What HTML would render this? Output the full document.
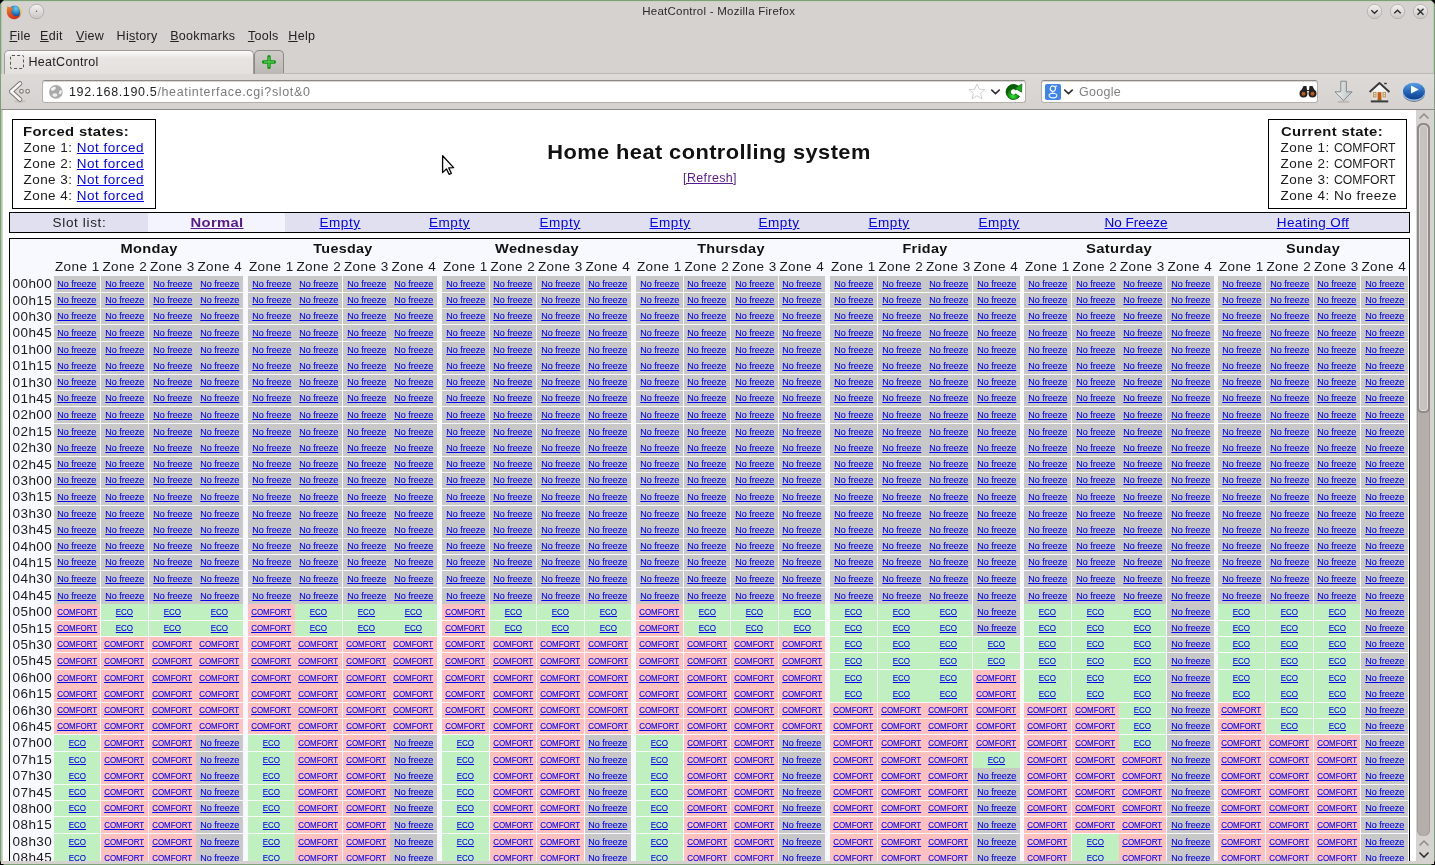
<!DOCTYPE html>
<html><head><meta charset="utf-8"><title>HeatControl</title><style>
html,body{margin:0;padding:0}
body{width:1435px;height:865px;overflow:hidden;background:#d6d2d0;font-family:"Liberation Sans",sans-serif;position:relative}
#w{position:absolute;left:0;top:0;width:1435px;height:865px;will-change:transform;overflow:hidden}
.a{position:absolute;white-space:nowrap}
#ct{position:absolute;left:0;top:0;width:1435px;height:865px;clip-path:inset(110px 19px 4px 3px)}
.c{position:absolute;height:15px;font-size:9.6px;line-height:15px;display:flex;justify-content:center;color:#0000ee;white-space:nowrap}
.c a{display:inline-block;text-decoration:underline;transform:scaleX(.9375);-webkit-text-stroke:0.12px #0000ee}
.n{background:#c8c8c8}
.p{background:#ffc0c0}
.p a{transform:scaleX(.828)}
.e{background:#c0f0c0}
.e a{transform:scaleX(.833)}
.tl{position:absolute;font-size:13.5px;line-height:16px;color:#1a1a1a;letter-spacing:0.45px}
</style></head>
<body><div id="w">
<div class="a" style="left:0px;top:0px;width:1435px;height:1px;background:#7e9f79;"></div>
<div class="a" style="left:0px;top:0px;width:1px;height:865px;background:#7e9f79;"></div>
<div class="a" style="left:1434px;top:0px;width:1px;height:865px;background:#7e9f79;"></div>
<div class="a" style="left:0px;top:864px;width:1435px;height:1px;background:#7e9f79;"></div>
<div class="a" style="left:1px;top:1px;width:1433px;height:1px;background:#c3d5bd;"></div>
<div class="a" style="left:1px;top:1px;width:1px;height:863px;background:#b5c9ae;"></div>
<div class="a" style="left:1433px;top:1px;width:1px;height:863px;background:#b5c9ae;"></div>
<svg class="a" style="left:0;top:0" width="4" height="4"><path d="M0 0 H4 L0 4 Z" fill="#000"/></svg>
<svg class="a" style="left:1431px;top:0" width="4" height="4"><path d="M0 0 H4 V4 Z" fill="#000"/></svg>
<svg class="a" style="left:0;top:861px" width="4" height="4"><path d="M0 0 V4 H4 Z" fill="#000"/></svg>
<svg class="a" style="left:1431px;top:861px" width="4" height="4"><path d="M4 0 V4 H0 Z" fill="#000"/></svg>
<div class="a" style="left:518.70px;top:6.27px;font-size:11.5px;line-height:11.5px;color:#2a2a2a;letter-spacing:0.25px;width:400px;text-align:center;">HeatControl - Mozilla Firefox</div>
<svg class="a" style="left:6px;top:4px" width="16" height="16" viewBox="0 0 16 16">
<defs><radialGradient id="fb" cx="0.6" cy="0.25" r="0.7"><stop offset="0" stop-color="#62d0f5"/><stop offset="0.6" stop-color="#1f78c8"/><stop offset="1" stop-color="#142f7a"/></radialGradient>
<linearGradient id="fo" x1="0" y1="0" x2="0.3" y2="1"><stop offset="0" stop-color="#f08a22"/><stop offset="1" stop-color="#d2331a"/></linearGradient>
<linearGradient id="fy" x1="0" y1="0" x2="0" y2="1"><stop offset="0" stop-color="#ffe15a"/><stop offset="1" stop-color="#f39a1c"/></linearGradient></defs>
<circle cx="8.7" cy="7.8" r="6.4" fill="url(#fb)"/>
<path d="M1.6 2.0 L3.6 3.4 L5.4 2.6 L6.0 4.4 L7.4 5.0 L5.6 6.4 C5.0 9.6 7.6 12.4 11 12.2 C12.9 12.1 14.4 11.0 15.2 9.2 C14.6 12.8 11.6 15.2 8.0 15.2 C3.8 15.2 0.8 11.8 0.8 7.6 C0.8 5.6 1.1 3.6 1.6 2.0 Z" fill="url(#fo)"/>
<path d="M11.8 1.6 C14.4 2.6 15.8 5.0 15.5 8.4 C15.2 10.4 14.4 11.6 13.2 12.4 C14.2 10.4 14.4 8.0 13.7 5.8 C13.3 4.3 12.6 2.8 11.8 1.6 Z" fill="url(#fy)"/>
</svg>
<svg class="a" style="left:28px;top:3px" width="17" height="17" viewBox="0 0 17 17">
<defs><linearGradient id="gb" x1="0" y1="0" x2="0" y2="1"><stop offset="0" stop-color="#f4f2f1"/><stop offset="1" stop-color="#c9c5c3"/></linearGradient></defs>
<circle cx="8.5" cy="8.5" r="7.3" fill="url(#gb)" stroke="#aaa5a2" stroke-width="0.8"/>
<circle cx="8.5" cy="8.3" r="0.7" fill="#555"/></svg>
<svg class="a" style="left:1365.8px;top:3px" width="17" height="17" viewBox="0 0 17 17">
<circle cx="8.5" cy="8.5" r="7.2" fill="url(#gb)" stroke="#b0aba8" stroke-width="0.8"/><path d="M5.3 7.2 L8.5 10.2 L11.7 7.2" fill="none" stroke="#2a2a2a" stroke-width="1.35"/></svg>
<svg class="a" style="left:1388.9px;top:3px" width="17" height="17" viewBox="0 0 17 17">
<circle cx="8.5" cy="8.5" r="7.2" fill="url(#gb)" stroke="#b0aba8" stroke-width="0.8"/><path d="M5.3 10.2 L8.5 7.2 L11.7 10.2" fill="none" stroke="#2a2a2a" stroke-width="1.35"/></svg>
<svg class="a" style="left:1412.0px;top:3px" width="17" height="17" viewBox="0 0 17 17">
<circle cx="8.5" cy="8.5" r="7.2" fill="url(#gb)" stroke="#b0aba8" stroke-width="0.8"/><path d="M5.5 5.8 L11.5 11.8 M11.5 5.8 L5.5 11.8" fill="none" stroke="#2a2a2a" stroke-width="1.35"/></svg>
<div class="a" style="left:9.40px;top:30.22px;font-size:12.5px;line-height:12.5px;color:#222;letter-spacing:0.3px;"><u>F</u>ile</div>
<div class="a" style="left:40.10px;top:30.22px;font-size:12.5px;line-height:12.5px;color:#222;letter-spacing:0.3px;"><u>E</u>dit</div>
<div class="a" style="left:76.10px;top:30.22px;font-size:12.5px;line-height:12.5px;color:#222;letter-spacing:0.3px;"><u>V</u>iew</div>
<div class="a" style="left:116.60px;top:30.22px;font-size:12.5px;line-height:12.5px;color:#222;letter-spacing:0.3px;">Hi<u>s</u>tory</div>
<div class="a" style="left:170.20px;top:30.22px;font-size:12.5px;line-height:12.5px;color:#222;letter-spacing:0.3px;"><u>B</u>ookmarks</div>
<div class="a" style="left:247.90px;top:30.22px;font-size:12.5px;line-height:12.5px;color:#222;letter-spacing:0.3px;"><u>T</u>ools</div>
<div class="a" style="left:288.30px;top:30.22px;font-size:12.5px;line-height:12.5px;color:#222;letter-spacing:0.3px;"><u>H</u>elp</div>
<div class="a" style="left:4px;top:50px;width:248px;height:24px;border:1px solid #9f9b98;border-bottom:none;border-radius:5px 5px 0 0;background:linear-gradient(#fbfbfa,#e8e5e3 30%,#e3e0de)"></div>
<div class="a" style="left:254px;top:50px;width:28px;height:24px;border:1px solid #8d8986;border-bottom:none;border-radius:5px 5px 0 0;background:linear-gradient(#cfcbc9,#bab6b4)"></div>
<div class="a" style="left:283px;top:73px;width:1151px;height:1px;background:#bdb9b6;"></div>
<div class="a" style="left:10px;top:55px;width:12px;height:12px;border:1px dashed #555;border-radius:2px"></div>
<div class="a" style="left:28.50px;top:56.22px;font-size:12.5px;line-height:12.5px;color:#222;letter-spacing:0.3px;">HeatControl</div>
<svg class="a" style="left:261px;top:54px" width="16" height="16" viewBox="0 0 16 16">
<path d="M8 2.6 V13.4 M2.6 8 H13.4" stroke="#0b960b" stroke-width="3.4" stroke-linecap="round"/>
<path d="M8 3.4 V12.6 M3.4 8 H12.6" stroke="#52c852" stroke-width="1.3" stroke-linecap="round"/></svg>
<div class="a" style="left:1px;top:74px;width:1433px;height:35px;background:linear-gradient(#dedad8,#d6d2d0);"></div>
<div class="a" style="left:1px;top:109px;width:1433px;height:1px;background:#8f8b88;"></div>
<svg class="a" style="left:6px;top:80px" width="26" height="24" viewBox="0 0 26 24">
<ellipse cx="14" cy="21.3" rx="6" ry="1.4" fill="#b8b4b1" opacity="0.6"/>
<path d="M14 3.5 L5.2 11.5 L14 19.5" fill="none" stroke="#777370" stroke-width="4.6" stroke-linecap="round" stroke-linejoin="round"/>
<path d="M14 3.5 L5.2 11.5 L14 19.5" fill="none" stroke="#f7f6f5" stroke-width="2.8" stroke-linecap="round" stroke-linejoin="round"/>
<circle cx="15.5" cy="11.3" r="1.8" fill="#f7f6f5" stroke="#777370" stroke-width="1.1"/>
<circle cx="21.6" cy="11.3" r="1.8" fill="#f7f6f5" stroke="#777370" stroke-width="1.1"/></svg>
<div class="a" style="left:42px;top:80px;width:982px;height:21px;border:1px solid #b3afac;border-top-color:#8d8986;border-radius:3px;background:#fff;box-shadow:inset 0 1px 0 #d8d6d4"></div>
<svg class="a" style="left:49px;top:85px" width="14" height="14" viewBox="0 0 14 14">
<circle cx="6.9" cy="6.9" r="6.8" fill="#a9a9a9"/>
<ellipse cx="4.4" cy="3.7" rx="2.7" ry="1.6" fill="#f2f2f2" transform="rotate(-25 4.4 3.7)"/>
<ellipse cx="5.9" cy="10.1" rx="2.6" ry="1.8" fill="#eeeeee"/>
<ellipse cx="11.4" cy="7.2" rx="1.3" ry="2.2" fill="#f0f0f0" transform="rotate(25 11.4 7.2)"/></svg>
<div class="a" style="left:69.00px;top:86.22px;font-size:12.5px;line-height:12.5px;color:#7a7a7a;letter-spacing:0.65px;"><span style="color:#1e1e1e">192.168.190.5</span>/heatinterface.cgi?slot&amp;0</div>
<svg class="a" style="left:968px;top:83px" width="18" height="17" viewBox="0 0 18 17">
<path d="M9 1 L11.3 6.2 L17 6.6 L12.6 10.3 L14 15.8 L9 12.8 L4 15.8 L5.4 10.3 L1 6.6 L6.7 6.2 Z" fill="#fff" stroke="#c8c8c8" stroke-width="0.9"/></svg>
<svg class="a" style="left:990px;top:87px" width="11" height="9" viewBox="0 0 11 9">
<path d="M1.3 2.6 L5.5 6.6 L9.7 2.6" fill="none" stroke="#2a2a2a" stroke-width="1.5"/></svg>
<svg class="a" style="left:1004px;top:83px" width="19" height="18" viewBox="0 0 19 18">
<defs><radialGradient id="rg" cx="0.5" cy="0.85" r="0.7"><stop offset="0" stop-color="#3df03d"/><stop offset="0.6" stop-color="#14a014"/><stop offset="1" stop-color="#066006"/></radialGradient></defs>
<path d="M13.56 5.59 A5.3 5.3 0 1 0 13.84 12.04" fill="none" stroke="#0a5a0a" stroke-width="5.2"/>
<path d="M13.56 5.59 A5.3 5.3 0 1 0 13.84 12.04" fill="none" stroke="url(#rg)" stroke-width="4.0"/>
<path d="M10.8 5.2 L17.9 1.0 L17.6 9.2 Z" fill="#18a818" stroke="#0a5a0a" stroke-width="0.7" stroke-linejoin="round"/></svg>
<div class="a" style="left:1041px;top:80px;width:275px;height:21px;border:1px solid #b3afac;border-top-color:#8d8986;border-radius:3px;background:#fff;box-shadow:inset 0 1px 0 #d8d6d4"></div>
<div class="a" style="left:1045px;top:84px;width:16px;height:16px;background:#3f83ef;border-radius:2px"></div>
<svg class="a" style="left:1045px;top:84px" width="16" height="16" viewBox="0 0 16 16">
<ellipse cx="7.9" cy="4.6" rx="2.6" ry="2.6" fill="none" stroke="#fff" stroke-width="1.1" transform="rotate(25 7.9 4.6)"/>
<ellipse cx="8" cy="11.6" rx="3.9" ry="2.3" fill="none" stroke="#fff" stroke-width="1.1"/>
<path d="M7.2 7.1 C6.5 8 6.8 8.8 8.6 9.2" fill="none" stroke="#fff" stroke-width="1"/>
<path d="M9.8 2.3 L12.2 2.1" stroke="#fff" stroke-width="1"/></svg>
<svg class="a" style="left:1063px;top:87px" width="11" height="9" viewBox="0 0 11 9">
<path d="M1.3 2.6 L5.5 6.6 L9.7 2.6" fill="none" stroke="#2a2a2a" stroke-width="1.5"/></svg>
<div class="a" style="left:1079.00px;top:86.12px;font-size:12.5px;line-height:12.5px;color:#808080;letter-spacing:0.3px;">Google</div>
<svg class="a" style="left:1299px;top:85px" width="18" height="13" viewBox="0 0 18 13">
<path d="M2 6 L4.5 1 L7.5 1 L8 5 L10 5 L10.5 1 L13.5 1 L16 6 Z" fill="#222"/>
<circle cx="4.5" cy="8.5" r="4" fill="#222"/><circle cx="13.5" cy="8.5" r="4" fill="#222"/>
<circle cx="4.5" cy="8.7" r="2" fill="#b85a1a"/><circle cx="13.5" cy="8.7" r="2" fill="#b85a1a"/></svg>
<svg class="a" style="left:1334px;top:80px" width="20" height="24" viewBox="0 0 20 24">
<defs><linearGradient id="dg" x1="0" y1="0" x2="1" y2="0"><stop offset="0" stop-color="#f3f5f6"/><stop offset="1" stop-color="#b4bcc0"/></linearGradient></defs>
<ellipse cx="9.5" cy="21.8" rx="6.5" ry="1.2" fill="#b3afac" opacity="0.7"/>
<path d="M6.8 1.2 H12.4 V11.8 H18.2 L9.6 20.6 L1 11.8 H6.8 Z" fill="url(#dg)" stroke="#858b8e" stroke-width="1" stroke-linejoin="round"/></svg>
<svg class="a" style="left:1368px;top:81px" width="23" height="22" viewBox="0 0 23 22">
<defs><linearGradient id="hw" x1="0" y1="0" x2="0" y2="1"><stop offset="0" stop-color="#ffffff"/><stop offset="1" stop-color="#dcdcdc"/></linearGradient></defs>
<path d="M4.2 9.5 L11.5 3 L18.8 9.5 V19.8 H4.2 Z" fill="url(#hw)"/>
<path d="M1.6 11 L11.5 2 L21.4 11" fill="none" stroke="#3a3a3a" stroke-width="1.9" stroke-linejoin="round"/>
<rect x="16.2" y="1.8" width="2.6" height="1.4" fill="#333"/>
<rect x="9.6" y="11.2" width="3.8" height="8.2" fill="#c85a10"/>
<rect x="9.6" y="18.6" width="3.8" height="0.9" fill="#4a8a2a"/>
<rect x="5.4" y="11.4" width="2.6" height="4.6" fill="none" stroke="#b88a4a" stroke-width="0.9"/>
<rect x="15" y="11.4" width="2.6" height="4.6" fill="none" stroke="#b88a4a" stroke-width="0.9"/>
<path d="M5.4 13.7 H8 M15 13.7 H17.6" stroke="#b88a4a" stroke-width="0.8"/>
<rect x="2.8" y="19.4" width="17.4" height="2" fill="#3c3c3c"/></svg>
<svg class="a" style="left:1402px;top:81px" width="24" height="22" viewBox="0 0 24 22">
<defs><linearGradient id="bp" x1="0" y1="0" x2="0" y2="1"><stop offset="0" stop-color="#5a9ee6"/><stop offset="0.6" stop-color="#1f5fb5"/><stop offset="1" stop-color="#103f8a"/></linearGradient></defs>
<ellipse cx="12" cy="12.6" rx="11" ry="8.4" fill="#2b2b2b" opacity="0.55"/>
<ellipse cx="12" cy="11.4" rx="11" ry="8.6" fill="#8fc0f0"/>
<ellipse cx="12" cy="10.2" rx="11" ry="8.4" fill="url(#bp)"/>
<path d="M9 4.4 L16.8 8.6 L9 12.4 Z" fill="#fff"/></svg>
<div id="ct">
<div class="a" style="left:0px;top:109px;width:1435px;height:756px;background:#fff;"></div>
<div class="a" style="left:12px;top:119px;width:142px;height:88px;border:1px solid #000"></div>
<div class="a" style="left:23.40px;top:125.37px;font-size:13.5px;line-height:13.5px;color:#111;font-weight:bold;letter-spacing:0.3px;transform:scaleX(1.10);transform-origin:0 0;">Forced states:</div>
<div class="a" style="left:23.40px;top:141.47px;font-size:13.5px;line-height:13.5px;color:#1a1a1a;letter-spacing:0.49px;">Zone 1: <span style="color:#0000ee;text-decoration:underline">Not forced</span></div>
<div class="a" style="left:23.40px;top:157.47px;font-size:13.5px;line-height:13.5px;color:#1a1a1a;letter-spacing:0.49px;">Zone 2: <span style="color:#0000ee;text-decoration:underline">Not forced</span></div>
<div class="a" style="left:23.40px;top:173.47px;font-size:13.5px;line-height:13.5px;color:#1a1a1a;letter-spacing:0.49px;">Zone 3: <span style="color:#0000ee;text-decoration:underline">Not forced</span></div>
<div class="a" style="left:23.40px;top:189.47px;font-size:13.5px;line-height:13.5px;color:#1a1a1a;letter-spacing:0.49px;">Zone 4: <span style="color:#0000ee;text-decoration:underline">Not forced</span></div>
<div class="a" style="left:409.00px;top:141.85px;font-size:20.5px;line-height:20.5px;color:#111;font-weight:bold;letter-spacing:0.4px;width:600px;text-align:center;transform:scaleX(1.064);">Home heat controlling system</div>
<div class="a" style="left:610.00px;top:171.82px;font-size:12.5px;line-height:12.5px;color:#551a8b;letter-spacing:0.35px;text-decoration:underline;width:200px;text-align:center;">[Refresh]</div>
<div class="a" style="left:1268px;top:119px;width:137px;height:88px;border:1px solid #000"></div>
<div class="a" style="left:1280.50px;top:125.37px;font-size:13.5px;line-height:13.5px;color:#111;font-weight:bold;letter-spacing:0.3px;transform:scaleX(1.10);transform-origin:0 0;">Current state:</div>
<div class="a" style="left:1280.50px;top:141.47px;font-size:13.5px;line-height:13.5px;color:#1a1a1a;letter-spacing:0.5px;">Zone 1:</div>
<div class="a" style="left:1333.90px;top:141.47px;font-size:13.5px;line-height:13.5px;color:#1a1a1a;transform:scaleX(0.905);transform-origin:0 0;">COMFORT</div>
<div class="a" style="left:1280.50px;top:157.47px;font-size:13.5px;line-height:13.5px;color:#1a1a1a;letter-spacing:0.5px;">Zone 2:</div>
<div class="a" style="left:1333.90px;top:157.47px;font-size:13.5px;line-height:13.5px;color:#1a1a1a;transform:scaleX(0.905);transform-origin:0 0;">COMFORT</div>
<div class="a" style="left:1280.50px;top:173.47px;font-size:13.5px;line-height:13.5px;color:#1a1a1a;letter-spacing:0.5px;">Zone 3:</div>
<div class="a" style="left:1333.90px;top:173.47px;font-size:13.5px;line-height:13.5px;color:#1a1a1a;transform:scaleX(0.905);transform-origin:0 0;">COMFORT</div>
<div class="a" style="left:1280.50px;top:189.47px;font-size:13.5px;line-height:13.5px;color:#1a1a1a;letter-spacing:0.5px;">Zone 4:</div>
<div class="a" style="left:1333.90px;top:189.47px;font-size:13.5px;line-height:13.5px;color:#1a1a1a;letter-spacing:0.5px;">No freeze</div>
<div class="a" style="left:9px;top:212px;width:1399px;height:19px;border:1px solid #000;background:#e0e0f0"></div>
<div class="a" style="left:148px;top:213px;width:137px;height:19px;background:#f4f4ff;"></div>
<div class="a" style="left:14.50px;top:215.97px;font-size:13.5px;line-height:13.5px;color:#222;letter-spacing:0.65px;width:130px;text-align:center;">Slot list:</div>
<div class="a" style="left:151.50px;top:215.97px;font-size:13.5px;line-height:13.5px;color:#551a8b;font-weight:bold;letter-spacing:0.3px;text-decoration:underline;width:130px;text-align:center;transform:scaleX(1.097);">Normal</div>
<div class="a" style="left:290.00px;top:215.97px;font-size:13.5px;line-height:13.5px;color:#0000ee;letter-spacing:0.55px;text-decoration:underline;width:100px;text-align:center;">Empty</div>
<div class="a" style="left:399.50px;top:215.97px;font-size:13.5px;line-height:13.5px;color:#0000ee;letter-spacing:0.55px;text-decoration:underline;width:100px;text-align:center;">Empty</div>
<div class="a" style="left:510.00px;top:215.97px;font-size:13.5px;line-height:13.5px;color:#0000ee;letter-spacing:0.55px;text-decoration:underline;width:100px;text-align:center;">Empty</div>
<div class="a" style="left:620.00px;top:215.97px;font-size:13.5px;line-height:13.5px;color:#0000ee;letter-spacing:0.55px;text-decoration:underline;width:100px;text-align:center;">Empty</div>
<div class="a" style="left:729.00px;top:215.97px;font-size:13.5px;line-height:13.5px;color:#0000ee;letter-spacing:0.55px;text-decoration:underline;width:100px;text-align:center;">Empty</div>
<div class="a" style="left:839.00px;top:215.97px;font-size:13.5px;line-height:13.5px;color:#0000ee;letter-spacing:0.55px;text-decoration:underline;width:100px;text-align:center;">Empty</div>
<div class="a" style="left:949.00px;top:215.97px;font-size:13.5px;line-height:13.5px;color:#0000ee;letter-spacing:0.55px;text-decoration:underline;width:100px;text-align:center;">Empty</div>
<div class="a" style="left:1061.00px;top:215.97px;font-size:13.5px;line-height:13.5px;color:#0000ee;text-decoration:underline;width:150px;text-align:center;">No Freeze</div>
<div class="a" style="left:1238.00px;top:215.97px;font-size:13.5px;line-height:13.5px;color:#0000ee;letter-spacing:0.4px;text-decoration:underline;width:150px;text-align:center;">Heating Off</div>
<div class="a" style="left:9px;top:238px;width:1399px;height:700px;border:1px solid #000;background:#f8f8ff"></div>
<div class="a" style="left:53.50px;top:242.27px;font-size:13.5px;line-height:13.5px;color:#111;font-weight:bold;letter-spacing:0.3px;width:190px;text-align:center;transform:scaleX(1.084);">Monday</div>
<div class="a" style="left:47.25px;top:260.47px;font-size:13.5px;line-height:13.5px;color:#1a1a1a;letter-spacing:0.45px;width:60px;text-align:center;">Zone 1</div>
<div class="a" style="left:94.75px;top:260.47px;font-size:13.5px;line-height:13.5px;color:#1a1a1a;letter-spacing:0.45px;width:60px;text-align:center;">Zone 2</div>
<div class="a" style="left:142.25px;top:260.47px;font-size:13.5px;line-height:13.5px;color:#1a1a1a;letter-spacing:0.45px;width:60px;text-align:center;">Zone 3</div>
<div class="a" style="left:189.75px;top:260.47px;font-size:13.5px;line-height:13.5px;color:#1a1a1a;letter-spacing:0.45px;width:60px;text-align:center;">Zone 4</div>
<div class="a" style="left:247.50px;top:242.27px;font-size:13.5px;line-height:13.5px;color:#111;font-weight:bold;letter-spacing:0.3px;width:190px;text-align:center;transform:scaleX(1.062);">Tuesday</div>
<div class="a" style="left:241.25px;top:260.47px;font-size:13.5px;line-height:13.5px;color:#1a1a1a;letter-spacing:0.45px;width:60px;text-align:center;">Zone 1</div>
<div class="a" style="left:288.75px;top:260.47px;font-size:13.5px;line-height:13.5px;color:#1a1a1a;letter-spacing:0.45px;width:60px;text-align:center;">Zone 2</div>
<div class="a" style="left:336.25px;top:260.47px;font-size:13.5px;line-height:13.5px;color:#1a1a1a;letter-spacing:0.45px;width:60px;text-align:center;">Zone 3</div>
<div class="a" style="left:383.75px;top:260.47px;font-size:13.5px;line-height:13.5px;color:#1a1a1a;letter-spacing:0.45px;width:60px;text-align:center;">Zone 4</div>
<div class="a" style="left:441.50px;top:242.27px;font-size:13.5px;line-height:13.5px;color:#111;font-weight:bold;letter-spacing:0.3px;width:190px;text-align:center;transform:scaleX(1.083);">Wednesday</div>
<div class="a" style="left:435.25px;top:260.47px;font-size:13.5px;line-height:13.5px;color:#1a1a1a;letter-spacing:0.45px;width:60px;text-align:center;">Zone 1</div>
<div class="a" style="left:482.75px;top:260.47px;font-size:13.5px;line-height:13.5px;color:#1a1a1a;letter-spacing:0.45px;width:60px;text-align:center;">Zone 2</div>
<div class="a" style="left:530.25px;top:260.47px;font-size:13.5px;line-height:13.5px;color:#1a1a1a;letter-spacing:0.45px;width:60px;text-align:center;">Zone 3</div>
<div class="a" style="left:577.75px;top:260.47px;font-size:13.5px;line-height:13.5px;color:#1a1a1a;letter-spacing:0.45px;width:60px;text-align:center;">Zone 4</div>
<div class="a" style="left:635.50px;top:242.27px;font-size:13.5px;line-height:13.5px;color:#111;font-weight:bold;letter-spacing:0.3px;width:190px;text-align:center;transform:scaleX(1.071);">Thursday</div>
<div class="a" style="left:629.25px;top:260.47px;font-size:13.5px;line-height:13.5px;color:#1a1a1a;letter-spacing:0.45px;width:60px;text-align:center;">Zone 1</div>
<div class="a" style="left:676.75px;top:260.47px;font-size:13.5px;line-height:13.5px;color:#1a1a1a;letter-spacing:0.45px;width:60px;text-align:center;">Zone 2</div>
<div class="a" style="left:724.25px;top:260.47px;font-size:13.5px;line-height:13.5px;color:#1a1a1a;letter-spacing:0.45px;width:60px;text-align:center;">Zone 3</div>
<div class="a" style="left:771.75px;top:260.47px;font-size:13.5px;line-height:13.5px;color:#1a1a1a;letter-spacing:0.45px;width:60px;text-align:center;">Zone 4</div>
<div class="a" style="left:829.50px;top:242.27px;font-size:13.5px;line-height:13.5px;color:#111;font-weight:bold;letter-spacing:0.3px;width:190px;text-align:center;transform:scaleX(1.064);">Friday</div>
<div class="a" style="left:823.25px;top:260.47px;font-size:13.5px;line-height:13.5px;color:#1a1a1a;letter-spacing:0.45px;width:60px;text-align:center;">Zone 1</div>
<div class="a" style="left:870.75px;top:260.47px;font-size:13.5px;line-height:13.5px;color:#1a1a1a;letter-spacing:0.45px;width:60px;text-align:center;">Zone 2</div>
<div class="a" style="left:918.25px;top:260.47px;font-size:13.5px;line-height:13.5px;color:#1a1a1a;letter-spacing:0.45px;width:60px;text-align:center;">Zone 3</div>
<div class="a" style="left:965.75px;top:260.47px;font-size:13.5px;line-height:13.5px;color:#1a1a1a;letter-spacing:0.45px;width:60px;text-align:center;">Zone 4</div>
<div class="a" style="left:1023.50px;top:242.27px;font-size:13.5px;line-height:13.5px;color:#111;font-weight:bold;letter-spacing:0.3px;width:190px;text-align:center;transform:scaleX(1.099);">Saturday</div>
<div class="a" style="left:1017.25px;top:260.47px;font-size:13.5px;line-height:13.5px;color:#1a1a1a;letter-spacing:0.45px;width:60px;text-align:center;">Zone 1</div>
<div class="a" style="left:1064.75px;top:260.47px;font-size:13.5px;line-height:13.5px;color:#1a1a1a;letter-spacing:0.45px;width:60px;text-align:center;">Zone 2</div>
<div class="a" style="left:1112.25px;top:260.47px;font-size:13.5px;line-height:13.5px;color:#1a1a1a;letter-spacing:0.45px;width:60px;text-align:center;">Zone 3</div>
<div class="a" style="left:1159.75px;top:260.47px;font-size:13.5px;line-height:13.5px;color:#1a1a1a;letter-spacing:0.45px;width:60px;text-align:center;">Zone 4</div>
<div class="a" style="left:1217.50px;top:242.27px;font-size:13.5px;line-height:13.5px;color:#111;font-weight:bold;letter-spacing:0.3px;width:190px;text-align:center;transform:scaleX(1.068);">Sunday</div>
<div class="a" style="left:1211.25px;top:260.47px;font-size:13.5px;line-height:13.5px;color:#1a1a1a;letter-spacing:0.45px;width:60px;text-align:center;">Zone 1</div>
<div class="a" style="left:1258.75px;top:260.47px;font-size:13.5px;line-height:13.5px;color:#1a1a1a;letter-spacing:0.45px;width:60px;text-align:center;">Zone 2</div>
<div class="a" style="left:1306.25px;top:260.47px;font-size:13.5px;line-height:13.5px;color:#1a1a1a;letter-spacing:0.45px;width:60px;text-align:center;">Zone 3</div>
<div class="a" style="left:1353.75px;top:260.47px;font-size:13.5px;line-height:13.5px;color:#1a1a1a;letter-spacing:0.45px;width:60px;text-align:center;">Zone 4</div>
<div class="tl" style="left:12.5px;top:276px">00h00</div>
<div class="c n" style="left:54px;top:276px;width:46px;height:16px;line-height:15px"><a>No freeze</a></div>
<div class="c n" style="left:101px;top:276px;width:47px;height:16px;line-height:15px"><a>No freeze</a></div>
<div class="c n" style="left:149px;top:276px;width:47px;height:16px;line-height:15px"><a>No freeze</a></div>
<div class="c n" style="left:196px;top:276px;width:47px;height:16px;line-height:15px"><a>No freeze</a></div>
<div class="c n" style="left:248px;top:276px;width:47px;height:16px;line-height:15px"><a>No freeze</a></div>
<div class="c n" style="left:295px;top:276px;width:47px;height:16px;line-height:15px"><a>No freeze</a></div>
<div class="c n" style="left:343px;top:276px;width:47px;height:16px;line-height:15px"><a>No freeze</a></div>
<div class="c n" style="left:390px;top:276px;width:47px;height:16px;line-height:15px"><a>No freeze</a></div>
<div class="c n" style="left:442px;top:276px;width:47px;height:16px;line-height:15px"><a>No freeze</a></div>
<div class="c n" style="left:490px;top:276px;width:46px;height:16px;line-height:15px"><a>No freeze</a></div>
<div class="c n" style="left:537px;top:276px;width:47px;height:16px;line-height:15px"><a>No freeze</a></div>
<div class="c n" style="left:585px;top:276px;width:46px;height:16px;line-height:15px"><a>No freeze</a></div>
<div class="c n" style="left:636px;top:276px;width:47px;height:16px;line-height:15px"><a>No freeze</a></div>
<div class="c n" style="left:684px;top:276px;width:46px;height:16px;line-height:15px"><a>No freeze</a></div>
<div class="c n" style="left:731px;top:276px;width:47px;height:16px;line-height:15px"><a>No freeze</a></div>
<div class="c n" style="left:779px;top:276px;width:46px;height:16px;line-height:15px"><a>No freeze</a></div>
<div class="c n" style="left:830px;top:276px;width:47px;height:16px;line-height:15px"><a>No freeze</a></div>
<div class="c n" style="left:878px;top:276px;width:47px;height:16px;line-height:15px"><a>No freeze</a></div>
<div class="c n" style="left:925px;top:276px;width:47px;height:16px;line-height:15px"><a>No freeze</a></div>
<div class="c n" style="left:973px;top:276px;width:47px;height:16px;line-height:15px"><a>No freeze</a></div>
<div class="c n" style="left:1024px;top:276px;width:47px;height:16px;line-height:15px"><a>No freeze</a></div>
<div class="c n" style="left:1072px;top:276px;width:47px;height:16px;line-height:15px"><a>No freeze</a></div>
<div class="c n" style="left:1119px;top:276px;width:47px;height:16px;line-height:15px"><a>No freeze</a></div>
<div class="c n" style="left:1167px;top:276px;width:47px;height:16px;line-height:15px"><a>No freeze</a></div>
<div class="c n" style="left:1218px;top:276px;width:47px;height:16px;line-height:15px"><a>No freeze</a></div>
<div class="c n" style="left:1266px;top:276px;width:47px;height:16px;line-height:15px"><a>No freeze</a></div>
<div class="c n" style="left:1314px;top:276px;width:46px;height:16px;line-height:15px"><a>No freeze</a></div>
<div class="c n" style="left:1361px;top:276px;width:47px;height:16px;line-height:15px"><a>No freeze</a></div>
<div class="tl" style="left:12.5px;top:293px">00h15</div>
<div class="c n" style="left:54px;top:293px;width:46px;height:15px;line-height:14px"><a>No freeze</a></div>
<div class="c n" style="left:101px;top:293px;width:47px;height:15px;line-height:14px"><a>No freeze</a></div>
<div class="c n" style="left:149px;top:293px;width:47px;height:15px;line-height:14px"><a>No freeze</a></div>
<div class="c n" style="left:196px;top:293px;width:47px;height:15px;line-height:14px"><a>No freeze</a></div>
<div class="c n" style="left:248px;top:293px;width:47px;height:15px;line-height:14px"><a>No freeze</a></div>
<div class="c n" style="left:295px;top:293px;width:47px;height:15px;line-height:14px"><a>No freeze</a></div>
<div class="c n" style="left:343px;top:293px;width:47px;height:15px;line-height:14px"><a>No freeze</a></div>
<div class="c n" style="left:390px;top:293px;width:47px;height:15px;line-height:14px"><a>No freeze</a></div>
<div class="c n" style="left:442px;top:293px;width:47px;height:15px;line-height:14px"><a>No freeze</a></div>
<div class="c n" style="left:490px;top:293px;width:46px;height:15px;line-height:14px"><a>No freeze</a></div>
<div class="c n" style="left:537px;top:293px;width:47px;height:15px;line-height:14px"><a>No freeze</a></div>
<div class="c n" style="left:585px;top:293px;width:46px;height:15px;line-height:14px"><a>No freeze</a></div>
<div class="c n" style="left:636px;top:293px;width:47px;height:15px;line-height:14px"><a>No freeze</a></div>
<div class="c n" style="left:684px;top:293px;width:46px;height:15px;line-height:14px"><a>No freeze</a></div>
<div class="c n" style="left:731px;top:293px;width:47px;height:15px;line-height:14px"><a>No freeze</a></div>
<div class="c n" style="left:779px;top:293px;width:46px;height:15px;line-height:14px"><a>No freeze</a></div>
<div class="c n" style="left:830px;top:293px;width:47px;height:15px;line-height:14px"><a>No freeze</a></div>
<div class="c n" style="left:878px;top:293px;width:47px;height:15px;line-height:14px"><a>No freeze</a></div>
<div class="c n" style="left:925px;top:293px;width:47px;height:15px;line-height:14px"><a>No freeze</a></div>
<div class="c n" style="left:973px;top:293px;width:47px;height:15px;line-height:14px"><a>No freeze</a></div>
<div class="c n" style="left:1024px;top:293px;width:47px;height:15px;line-height:14px"><a>No freeze</a></div>
<div class="c n" style="left:1072px;top:293px;width:47px;height:15px;line-height:14px"><a>No freeze</a></div>
<div class="c n" style="left:1119px;top:293px;width:47px;height:15px;line-height:14px"><a>No freeze</a></div>
<div class="c n" style="left:1167px;top:293px;width:47px;height:15px;line-height:14px"><a>No freeze</a></div>
<div class="c n" style="left:1218px;top:293px;width:47px;height:15px;line-height:14px"><a>No freeze</a></div>
<div class="c n" style="left:1266px;top:293px;width:47px;height:15px;line-height:14px"><a>No freeze</a></div>
<div class="c n" style="left:1314px;top:293px;width:46px;height:15px;line-height:14px"><a>No freeze</a></div>
<div class="c n" style="left:1361px;top:293px;width:47px;height:15px;line-height:14px"><a>No freeze</a></div>
<div class="tl" style="left:12.5px;top:309px">00h30</div>
<div class="c n" style="left:54px;top:309px;width:46px;height:15px;line-height:14px"><a>No freeze</a></div>
<div class="c n" style="left:101px;top:309px;width:47px;height:15px;line-height:14px"><a>No freeze</a></div>
<div class="c n" style="left:149px;top:309px;width:47px;height:15px;line-height:14px"><a>No freeze</a></div>
<div class="c n" style="left:196px;top:309px;width:47px;height:15px;line-height:14px"><a>No freeze</a></div>
<div class="c n" style="left:248px;top:309px;width:47px;height:15px;line-height:14px"><a>No freeze</a></div>
<div class="c n" style="left:295px;top:309px;width:47px;height:15px;line-height:14px"><a>No freeze</a></div>
<div class="c n" style="left:343px;top:309px;width:47px;height:15px;line-height:14px"><a>No freeze</a></div>
<div class="c n" style="left:390px;top:309px;width:47px;height:15px;line-height:14px"><a>No freeze</a></div>
<div class="c n" style="left:442px;top:309px;width:47px;height:15px;line-height:14px"><a>No freeze</a></div>
<div class="c n" style="left:490px;top:309px;width:46px;height:15px;line-height:14px"><a>No freeze</a></div>
<div class="c n" style="left:537px;top:309px;width:47px;height:15px;line-height:14px"><a>No freeze</a></div>
<div class="c n" style="left:585px;top:309px;width:46px;height:15px;line-height:14px"><a>No freeze</a></div>
<div class="c n" style="left:636px;top:309px;width:47px;height:15px;line-height:14px"><a>No freeze</a></div>
<div class="c n" style="left:684px;top:309px;width:46px;height:15px;line-height:14px"><a>No freeze</a></div>
<div class="c n" style="left:731px;top:309px;width:47px;height:15px;line-height:14px"><a>No freeze</a></div>
<div class="c n" style="left:779px;top:309px;width:46px;height:15px;line-height:14px"><a>No freeze</a></div>
<div class="c n" style="left:830px;top:309px;width:47px;height:15px;line-height:14px"><a>No freeze</a></div>
<div class="c n" style="left:878px;top:309px;width:47px;height:15px;line-height:14px"><a>No freeze</a></div>
<div class="c n" style="left:925px;top:309px;width:47px;height:15px;line-height:14px"><a>No freeze</a></div>
<div class="c n" style="left:973px;top:309px;width:47px;height:15px;line-height:14px"><a>No freeze</a></div>
<div class="c n" style="left:1024px;top:309px;width:47px;height:15px;line-height:14px"><a>No freeze</a></div>
<div class="c n" style="left:1072px;top:309px;width:47px;height:15px;line-height:14px"><a>No freeze</a></div>
<div class="c n" style="left:1119px;top:309px;width:47px;height:15px;line-height:14px"><a>No freeze</a></div>
<div class="c n" style="left:1167px;top:309px;width:47px;height:15px;line-height:14px"><a>No freeze</a></div>
<div class="c n" style="left:1218px;top:309px;width:47px;height:15px;line-height:14px"><a>No freeze</a></div>
<div class="c n" style="left:1266px;top:309px;width:47px;height:15px;line-height:14px"><a>No freeze</a></div>
<div class="c n" style="left:1314px;top:309px;width:46px;height:15px;line-height:14px"><a>No freeze</a></div>
<div class="c n" style="left:1361px;top:309px;width:47px;height:15px;line-height:14px"><a>No freeze</a></div>
<div class="tl" style="left:12.5px;top:325px">00h45</div>
<div class="c n" style="left:54px;top:325px;width:46px;height:16px;line-height:15px"><a>No freeze</a></div>
<div class="c n" style="left:101px;top:325px;width:47px;height:16px;line-height:15px"><a>No freeze</a></div>
<div class="c n" style="left:149px;top:325px;width:47px;height:16px;line-height:15px"><a>No freeze</a></div>
<div class="c n" style="left:196px;top:325px;width:47px;height:16px;line-height:15px"><a>No freeze</a></div>
<div class="c n" style="left:248px;top:325px;width:47px;height:16px;line-height:15px"><a>No freeze</a></div>
<div class="c n" style="left:295px;top:325px;width:47px;height:16px;line-height:15px"><a>No freeze</a></div>
<div class="c n" style="left:343px;top:325px;width:47px;height:16px;line-height:15px"><a>No freeze</a></div>
<div class="c n" style="left:390px;top:325px;width:47px;height:16px;line-height:15px"><a>No freeze</a></div>
<div class="c n" style="left:442px;top:325px;width:47px;height:16px;line-height:15px"><a>No freeze</a></div>
<div class="c n" style="left:490px;top:325px;width:46px;height:16px;line-height:15px"><a>No freeze</a></div>
<div class="c n" style="left:537px;top:325px;width:47px;height:16px;line-height:15px"><a>No freeze</a></div>
<div class="c n" style="left:585px;top:325px;width:46px;height:16px;line-height:15px"><a>No freeze</a></div>
<div class="c n" style="left:636px;top:325px;width:47px;height:16px;line-height:15px"><a>No freeze</a></div>
<div class="c n" style="left:684px;top:325px;width:46px;height:16px;line-height:15px"><a>No freeze</a></div>
<div class="c n" style="left:731px;top:325px;width:47px;height:16px;line-height:15px"><a>No freeze</a></div>
<div class="c n" style="left:779px;top:325px;width:46px;height:16px;line-height:15px"><a>No freeze</a></div>
<div class="c n" style="left:830px;top:325px;width:47px;height:16px;line-height:15px"><a>No freeze</a></div>
<div class="c n" style="left:878px;top:325px;width:47px;height:16px;line-height:15px"><a>No freeze</a></div>
<div class="c n" style="left:925px;top:325px;width:47px;height:16px;line-height:15px"><a>No freeze</a></div>
<div class="c n" style="left:973px;top:325px;width:47px;height:16px;line-height:15px"><a>No freeze</a></div>
<div class="c n" style="left:1024px;top:325px;width:47px;height:16px;line-height:15px"><a>No freeze</a></div>
<div class="c n" style="left:1072px;top:325px;width:47px;height:16px;line-height:15px"><a>No freeze</a></div>
<div class="c n" style="left:1119px;top:325px;width:47px;height:16px;line-height:15px"><a>No freeze</a></div>
<div class="c n" style="left:1167px;top:325px;width:47px;height:16px;line-height:15px"><a>No freeze</a></div>
<div class="c n" style="left:1218px;top:325px;width:47px;height:16px;line-height:15px"><a>No freeze</a></div>
<div class="c n" style="left:1266px;top:325px;width:47px;height:16px;line-height:15px"><a>No freeze</a></div>
<div class="c n" style="left:1314px;top:325px;width:46px;height:16px;line-height:15px"><a>No freeze</a></div>
<div class="c n" style="left:1361px;top:325px;width:47px;height:16px;line-height:15px"><a>No freeze</a></div>
<div class="tl" style="left:12.5px;top:342px">01h00</div>
<div class="c n" style="left:54px;top:342px;width:46px;height:16px;line-height:15px"><a>No freeze</a></div>
<div class="c n" style="left:101px;top:342px;width:47px;height:16px;line-height:15px"><a>No freeze</a></div>
<div class="c n" style="left:149px;top:342px;width:47px;height:16px;line-height:15px"><a>No freeze</a></div>
<div class="c n" style="left:196px;top:342px;width:47px;height:16px;line-height:15px"><a>No freeze</a></div>
<div class="c n" style="left:248px;top:342px;width:47px;height:16px;line-height:15px"><a>No freeze</a></div>
<div class="c n" style="left:295px;top:342px;width:47px;height:16px;line-height:15px"><a>No freeze</a></div>
<div class="c n" style="left:343px;top:342px;width:47px;height:16px;line-height:15px"><a>No freeze</a></div>
<div class="c n" style="left:390px;top:342px;width:47px;height:16px;line-height:15px"><a>No freeze</a></div>
<div class="c n" style="left:442px;top:342px;width:47px;height:16px;line-height:15px"><a>No freeze</a></div>
<div class="c n" style="left:490px;top:342px;width:46px;height:16px;line-height:15px"><a>No freeze</a></div>
<div class="c n" style="left:537px;top:342px;width:47px;height:16px;line-height:15px"><a>No freeze</a></div>
<div class="c n" style="left:585px;top:342px;width:46px;height:16px;line-height:15px"><a>No freeze</a></div>
<div class="c n" style="left:636px;top:342px;width:47px;height:16px;line-height:15px"><a>No freeze</a></div>
<div class="c n" style="left:684px;top:342px;width:46px;height:16px;line-height:15px"><a>No freeze</a></div>
<div class="c n" style="left:731px;top:342px;width:47px;height:16px;line-height:15px"><a>No freeze</a></div>
<div class="c n" style="left:779px;top:342px;width:46px;height:16px;line-height:15px"><a>No freeze</a></div>
<div class="c n" style="left:830px;top:342px;width:47px;height:16px;line-height:15px"><a>No freeze</a></div>
<div class="c n" style="left:878px;top:342px;width:47px;height:16px;line-height:15px"><a>No freeze</a></div>
<div class="c n" style="left:925px;top:342px;width:47px;height:16px;line-height:15px"><a>No freeze</a></div>
<div class="c n" style="left:973px;top:342px;width:47px;height:16px;line-height:15px"><a>No freeze</a></div>
<div class="c n" style="left:1024px;top:342px;width:47px;height:16px;line-height:15px"><a>No freeze</a></div>
<div class="c n" style="left:1072px;top:342px;width:47px;height:16px;line-height:15px"><a>No freeze</a></div>
<div class="c n" style="left:1119px;top:342px;width:47px;height:16px;line-height:15px"><a>No freeze</a></div>
<div class="c n" style="left:1167px;top:342px;width:47px;height:16px;line-height:15px"><a>No freeze</a></div>
<div class="c n" style="left:1218px;top:342px;width:47px;height:16px;line-height:15px"><a>No freeze</a></div>
<div class="c n" style="left:1266px;top:342px;width:47px;height:16px;line-height:15px"><a>No freeze</a></div>
<div class="c n" style="left:1314px;top:342px;width:46px;height:16px;line-height:15px"><a>No freeze</a></div>
<div class="c n" style="left:1361px;top:342px;width:47px;height:16px;line-height:15px"><a>No freeze</a></div>
<div class="tl" style="left:12.5px;top:358px">01h15</div>
<div class="c n" style="left:54px;top:358px;width:46px;height:16px;line-height:15px"><a>No freeze</a></div>
<div class="c n" style="left:101px;top:358px;width:47px;height:16px;line-height:15px"><a>No freeze</a></div>
<div class="c n" style="left:149px;top:358px;width:47px;height:16px;line-height:15px"><a>No freeze</a></div>
<div class="c n" style="left:196px;top:358px;width:47px;height:16px;line-height:15px"><a>No freeze</a></div>
<div class="c n" style="left:248px;top:358px;width:47px;height:16px;line-height:15px"><a>No freeze</a></div>
<div class="c n" style="left:295px;top:358px;width:47px;height:16px;line-height:15px"><a>No freeze</a></div>
<div class="c n" style="left:343px;top:358px;width:47px;height:16px;line-height:15px"><a>No freeze</a></div>
<div class="c n" style="left:390px;top:358px;width:47px;height:16px;line-height:15px"><a>No freeze</a></div>
<div class="c n" style="left:442px;top:358px;width:47px;height:16px;line-height:15px"><a>No freeze</a></div>
<div class="c n" style="left:490px;top:358px;width:46px;height:16px;line-height:15px"><a>No freeze</a></div>
<div class="c n" style="left:537px;top:358px;width:47px;height:16px;line-height:15px"><a>No freeze</a></div>
<div class="c n" style="left:585px;top:358px;width:46px;height:16px;line-height:15px"><a>No freeze</a></div>
<div class="c n" style="left:636px;top:358px;width:47px;height:16px;line-height:15px"><a>No freeze</a></div>
<div class="c n" style="left:684px;top:358px;width:46px;height:16px;line-height:15px"><a>No freeze</a></div>
<div class="c n" style="left:731px;top:358px;width:47px;height:16px;line-height:15px"><a>No freeze</a></div>
<div class="c n" style="left:779px;top:358px;width:46px;height:16px;line-height:15px"><a>No freeze</a></div>
<div class="c n" style="left:830px;top:358px;width:47px;height:16px;line-height:15px"><a>No freeze</a></div>
<div class="c n" style="left:878px;top:358px;width:47px;height:16px;line-height:15px"><a>No freeze</a></div>
<div class="c n" style="left:925px;top:358px;width:47px;height:16px;line-height:15px"><a>No freeze</a></div>
<div class="c n" style="left:973px;top:358px;width:47px;height:16px;line-height:15px"><a>No freeze</a></div>
<div class="c n" style="left:1024px;top:358px;width:47px;height:16px;line-height:15px"><a>No freeze</a></div>
<div class="c n" style="left:1072px;top:358px;width:47px;height:16px;line-height:15px"><a>No freeze</a></div>
<div class="c n" style="left:1119px;top:358px;width:47px;height:16px;line-height:15px"><a>No freeze</a></div>
<div class="c n" style="left:1167px;top:358px;width:47px;height:16px;line-height:15px"><a>No freeze</a></div>
<div class="c n" style="left:1218px;top:358px;width:47px;height:16px;line-height:15px"><a>No freeze</a></div>
<div class="c n" style="left:1266px;top:358px;width:47px;height:16px;line-height:15px"><a>No freeze</a></div>
<div class="c n" style="left:1314px;top:358px;width:46px;height:16px;line-height:15px"><a>No freeze</a></div>
<div class="c n" style="left:1361px;top:358px;width:47px;height:16px;line-height:15px"><a>No freeze</a></div>
<div class="tl" style="left:12.5px;top:375px">01h30</div>
<div class="c n" style="left:54px;top:375px;width:46px;height:15px;line-height:14px"><a>No freeze</a></div>
<div class="c n" style="left:101px;top:375px;width:47px;height:15px;line-height:14px"><a>No freeze</a></div>
<div class="c n" style="left:149px;top:375px;width:47px;height:15px;line-height:14px"><a>No freeze</a></div>
<div class="c n" style="left:196px;top:375px;width:47px;height:15px;line-height:14px"><a>No freeze</a></div>
<div class="c n" style="left:248px;top:375px;width:47px;height:15px;line-height:14px"><a>No freeze</a></div>
<div class="c n" style="left:295px;top:375px;width:47px;height:15px;line-height:14px"><a>No freeze</a></div>
<div class="c n" style="left:343px;top:375px;width:47px;height:15px;line-height:14px"><a>No freeze</a></div>
<div class="c n" style="left:390px;top:375px;width:47px;height:15px;line-height:14px"><a>No freeze</a></div>
<div class="c n" style="left:442px;top:375px;width:47px;height:15px;line-height:14px"><a>No freeze</a></div>
<div class="c n" style="left:490px;top:375px;width:46px;height:15px;line-height:14px"><a>No freeze</a></div>
<div class="c n" style="left:537px;top:375px;width:47px;height:15px;line-height:14px"><a>No freeze</a></div>
<div class="c n" style="left:585px;top:375px;width:46px;height:15px;line-height:14px"><a>No freeze</a></div>
<div class="c n" style="left:636px;top:375px;width:47px;height:15px;line-height:14px"><a>No freeze</a></div>
<div class="c n" style="left:684px;top:375px;width:46px;height:15px;line-height:14px"><a>No freeze</a></div>
<div class="c n" style="left:731px;top:375px;width:47px;height:15px;line-height:14px"><a>No freeze</a></div>
<div class="c n" style="left:779px;top:375px;width:46px;height:15px;line-height:14px"><a>No freeze</a></div>
<div class="c n" style="left:830px;top:375px;width:47px;height:15px;line-height:14px"><a>No freeze</a></div>
<div class="c n" style="left:878px;top:375px;width:47px;height:15px;line-height:14px"><a>No freeze</a></div>
<div class="c n" style="left:925px;top:375px;width:47px;height:15px;line-height:14px"><a>No freeze</a></div>
<div class="c n" style="left:973px;top:375px;width:47px;height:15px;line-height:14px"><a>No freeze</a></div>
<div class="c n" style="left:1024px;top:375px;width:47px;height:15px;line-height:14px"><a>No freeze</a></div>
<div class="c n" style="left:1072px;top:375px;width:47px;height:15px;line-height:14px"><a>No freeze</a></div>
<div class="c n" style="left:1119px;top:375px;width:47px;height:15px;line-height:14px"><a>No freeze</a></div>
<div class="c n" style="left:1167px;top:375px;width:47px;height:15px;line-height:14px"><a>No freeze</a></div>
<div class="c n" style="left:1218px;top:375px;width:47px;height:15px;line-height:14px"><a>No freeze</a></div>
<div class="c n" style="left:1266px;top:375px;width:47px;height:15px;line-height:14px"><a>No freeze</a></div>
<div class="c n" style="left:1314px;top:375px;width:46px;height:15px;line-height:14px"><a>No freeze</a></div>
<div class="c n" style="left:1361px;top:375px;width:47px;height:15px;line-height:14px"><a>No freeze</a></div>
<div class="tl" style="left:12.5px;top:391px">01h45</div>
<div class="c n" style="left:54px;top:391px;width:46px;height:15px;line-height:14px"><a>No freeze</a></div>
<div class="c n" style="left:101px;top:391px;width:47px;height:15px;line-height:14px"><a>No freeze</a></div>
<div class="c n" style="left:149px;top:391px;width:47px;height:15px;line-height:14px"><a>No freeze</a></div>
<div class="c n" style="left:196px;top:391px;width:47px;height:15px;line-height:14px"><a>No freeze</a></div>
<div class="c n" style="left:248px;top:391px;width:47px;height:15px;line-height:14px"><a>No freeze</a></div>
<div class="c n" style="left:295px;top:391px;width:47px;height:15px;line-height:14px"><a>No freeze</a></div>
<div class="c n" style="left:343px;top:391px;width:47px;height:15px;line-height:14px"><a>No freeze</a></div>
<div class="c n" style="left:390px;top:391px;width:47px;height:15px;line-height:14px"><a>No freeze</a></div>
<div class="c n" style="left:442px;top:391px;width:47px;height:15px;line-height:14px"><a>No freeze</a></div>
<div class="c n" style="left:490px;top:391px;width:46px;height:15px;line-height:14px"><a>No freeze</a></div>
<div class="c n" style="left:537px;top:391px;width:47px;height:15px;line-height:14px"><a>No freeze</a></div>
<div class="c n" style="left:585px;top:391px;width:46px;height:15px;line-height:14px"><a>No freeze</a></div>
<div class="c n" style="left:636px;top:391px;width:47px;height:15px;line-height:14px"><a>No freeze</a></div>
<div class="c n" style="left:684px;top:391px;width:46px;height:15px;line-height:14px"><a>No freeze</a></div>
<div class="c n" style="left:731px;top:391px;width:47px;height:15px;line-height:14px"><a>No freeze</a></div>
<div class="c n" style="left:779px;top:391px;width:46px;height:15px;line-height:14px"><a>No freeze</a></div>
<div class="c n" style="left:830px;top:391px;width:47px;height:15px;line-height:14px"><a>No freeze</a></div>
<div class="c n" style="left:878px;top:391px;width:47px;height:15px;line-height:14px"><a>No freeze</a></div>
<div class="c n" style="left:925px;top:391px;width:47px;height:15px;line-height:14px"><a>No freeze</a></div>
<div class="c n" style="left:973px;top:391px;width:47px;height:15px;line-height:14px"><a>No freeze</a></div>
<div class="c n" style="left:1024px;top:391px;width:47px;height:15px;line-height:14px"><a>No freeze</a></div>
<div class="c n" style="left:1072px;top:391px;width:47px;height:15px;line-height:14px"><a>No freeze</a></div>
<div class="c n" style="left:1119px;top:391px;width:47px;height:15px;line-height:14px"><a>No freeze</a></div>
<div class="c n" style="left:1167px;top:391px;width:47px;height:15px;line-height:14px"><a>No freeze</a></div>
<div class="c n" style="left:1218px;top:391px;width:47px;height:15px;line-height:14px"><a>No freeze</a></div>
<div class="c n" style="left:1266px;top:391px;width:47px;height:15px;line-height:14px"><a>No freeze</a></div>
<div class="c n" style="left:1314px;top:391px;width:46px;height:15px;line-height:14px"><a>No freeze</a></div>
<div class="c n" style="left:1361px;top:391px;width:47px;height:15px;line-height:14px"><a>No freeze</a></div>
<div class="tl" style="left:12.5px;top:407px">02h00</div>
<div class="c n" style="left:54px;top:407px;width:46px;height:16px;line-height:15px"><a>No freeze</a></div>
<div class="c n" style="left:101px;top:407px;width:47px;height:16px;line-height:15px"><a>No freeze</a></div>
<div class="c n" style="left:149px;top:407px;width:47px;height:16px;line-height:15px"><a>No freeze</a></div>
<div class="c n" style="left:196px;top:407px;width:47px;height:16px;line-height:15px"><a>No freeze</a></div>
<div class="c n" style="left:248px;top:407px;width:47px;height:16px;line-height:15px"><a>No freeze</a></div>
<div class="c n" style="left:295px;top:407px;width:47px;height:16px;line-height:15px"><a>No freeze</a></div>
<div class="c n" style="left:343px;top:407px;width:47px;height:16px;line-height:15px"><a>No freeze</a></div>
<div class="c n" style="left:390px;top:407px;width:47px;height:16px;line-height:15px"><a>No freeze</a></div>
<div class="c n" style="left:442px;top:407px;width:47px;height:16px;line-height:15px"><a>No freeze</a></div>
<div class="c n" style="left:490px;top:407px;width:46px;height:16px;line-height:15px"><a>No freeze</a></div>
<div class="c n" style="left:537px;top:407px;width:47px;height:16px;line-height:15px"><a>No freeze</a></div>
<div class="c n" style="left:585px;top:407px;width:46px;height:16px;line-height:15px"><a>No freeze</a></div>
<div class="c n" style="left:636px;top:407px;width:47px;height:16px;line-height:15px"><a>No freeze</a></div>
<div class="c n" style="left:684px;top:407px;width:46px;height:16px;line-height:15px"><a>No freeze</a></div>
<div class="c n" style="left:731px;top:407px;width:47px;height:16px;line-height:15px"><a>No freeze</a></div>
<div class="c n" style="left:779px;top:407px;width:46px;height:16px;line-height:15px"><a>No freeze</a></div>
<div class="c n" style="left:830px;top:407px;width:47px;height:16px;line-height:15px"><a>No freeze</a></div>
<div class="c n" style="left:878px;top:407px;width:47px;height:16px;line-height:15px"><a>No freeze</a></div>
<div class="c n" style="left:925px;top:407px;width:47px;height:16px;line-height:15px"><a>No freeze</a></div>
<div class="c n" style="left:973px;top:407px;width:47px;height:16px;line-height:15px"><a>No freeze</a></div>
<div class="c n" style="left:1024px;top:407px;width:47px;height:16px;line-height:15px"><a>No freeze</a></div>
<div class="c n" style="left:1072px;top:407px;width:47px;height:16px;line-height:15px"><a>No freeze</a></div>
<div class="c n" style="left:1119px;top:407px;width:47px;height:16px;line-height:15px"><a>No freeze</a></div>
<div class="c n" style="left:1167px;top:407px;width:47px;height:16px;line-height:15px"><a>No freeze</a></div>
<div class="c n" style="left:1218px;top:407px;width:47px;height:16px;line-height:15px"><a>No freeze</a></div>
<div class="c n" style="left:1266px;top:407px;width:47px;height:16px;line-height:15px"><a>No freeze</a></div>
<div class="c n" style="left:1314px;top:407px;width:46px;height:16px;line-height:15px"><a>No freeze</a></div>
<div class="c n" style="left:1361px;top:407px;width:47px;height:16px;line-height:15px"><a>No freeze</a></div>
<div class="tl" style="left:12.5px;top:424px">02h15</div>
<div class="c n" style="left:54px;top:424px;width:46px;height:16px;line-height:15px"><a>No freeze</a></div>
<div class="c n" style="left:101px;top:424px;width:47px;height:16px;line-height:15px"><a>No freeze</a></div>
<div class="c n" style="left:149px;top:424px;width:47px;height:16px;line-height:15px"><a>No freeze</a></div>
<div class="c n" style="left:196px;top:424px;width:47px;height:16px;line-height:15px"><a>No freeze</a></div>
<div class="c n" style="left:248px;top:424px;width:47px;height:16px;line-height:15px"><a>No freeze</a></div>
<div class="c n" style="left:295px;top:424px;width:47px;height:16px;line-height:15px"><a>No freeze</a></div>
<div class="c n" style="left:343px;top:424px;width:47px;height:16px;line-height:15px"><a>No freeze</a></div>
<div class="c n" style="left:390px;top:424px;width:47px;height:16px;line-height:15px"><a>No freeze</a></div>
<div class="c n" style="left:442px;top:424px;width:47px;height:16px;line-height:15px"><a>No freeze</a></div>
<div class="c n" style="left:490px;top:424px;width:46px;height:16px;line-height:15px"><a>No freeze</a></div>
<div class="c n" style="left:537px;top:424px;width:47px;height:16px;line-height:15px"><a>No freeze</a></div>
<div class="c n" style="left:585px;top:424px;width:46px;height:16px;line-height:15px"><a>No freeze</a></div>
<div class="c n" style="left:636px;top:424px;width:47px;height:16px;line-height:15px"><a>No freeze</a></div>
<div class="c n" style="left:684px;top:424px;width:46px;height:16px;line-height:15px"><a>No freeze</a></div>
<div class="c n" style="left:731px;top:424px;width:47px;height:16px;line-height:15px"><a>No freeze</a></div>
<div class="c n" style="left:779px;top:424px;width:46px;height:16px;line-height:15px"><a>No freeze</a></div>
<div class="c n" style="left:830px;top:424px;width:47px;height:16px;line-height:15px"><a>No freeze</a></div>
<div class="c n" style="left:878px;top:424px;width:47px;height:16px;line-height:15px"><a>No freeze</a></div>
<div class="c n" style="left:925px;top:424px;width:47px;height:16px;line-height:15px"><a>No freeze</a></div>
<div class="c n" style="left:973px;top:424px;width:47px;height:16px;line-height:15px"><a>No freeze</a></div>
<div class="c n" style="left:1024px;top:424px;width:47px;height:16px;line-height:15px"><a>No freeze</a></div>
<div class="c n" style="left:1072px;top:424px;width:47px;height:16px;line-height:15px"><a>No freeze</a></div>
<div class="c n" style="left:1119px;top:424px;width:47px;height:16px;line-height:15px"><a>No freeze</a></div>
<div class="c n" style="left:1167px;top:424px;width:47px;height:16px;line-height:15px"><a>No freeze</a></div>
<div class="c n" style="left:1218px;top:424px;width:47px;height:16px;line-height:15px"><a>No freeze</a></div>
<div class="c n" style="left:1266px;top:424px;width:47px;height:16px;line-height:15px"><a>No freeze</a></div>
<div class="c n" style="left:1314px;top:424px;width:46px;height:16px;line-height:15px"><a>No freeze</a></div>
<div class="c n" style="left:1361px;top:424px;width:47px;height:16px;line-height:15px"><a>No freeze</a></div>
<div class="tl" style="left:12.5px;top:440px">02h30</div>
<div class="c n" style="left:54px;top:440px;width:46px;height:16px;line-height:15px"><a>No freeze</a></div>
<div class="c n" style="left:101px;top:440px;width:47px;height:16px;line-height:15px"><a>No freeze</a></div>
<div class="c n" style="left:149px;top:440px;width:47px;height:16px;line-height:15px"><a>No freeze</a></div>
<div class="c n" style="left:196px;top:440px;width:47px;height:16px;line-height:15px"><a>No freeze</a></div>
<div class="c n" style="left:248px;top:440px;width:47px;height:16px;line-height:15px"><a>No freeze</a></div>
<div class="c n" style="left:295px;top:440px;width:47px;height:16px;line-height:15px"><a>No freeze</a></div>
<div class="c n" style="left:343px;top:440px;width:47px;height:16px;line-height:15px"><a>No freeze</a></div>
<div class="c n" style="left:390px;top:440px;width:47px;height:16px;line-height:15px"><a>No freeze</a></div>
<div class="c n" style="left:442px;top:440px;width:47px;height:16px;line-height:15px"><a>No freeze</a></div>
<div class="c n" style="left:490px;top:440px;width:46px;height:16px;line-height:15px"><a>No freeze</a></div>
<div class="c n" style="left:537px;top:440px;width:47px;height:16px;line-height:15px"><a>No freeze</a></div>
<div class="c n" style="left:585px;top:440px;width:46px;height:16px;line-height:15px"><a>No freeze</a></div>
<div class="c n" style="left:636px;top:440px;width:47px;height:16px;line-height:15px"><a>No freeze</a></div>
<div class="c n" style="left:684px;top:440px;width:46px;height:16px;line-height:15px"><a>No freeze</a></div>
<div class="c n" style="left:731px;top:440px;width:47px;height:16px;line-height:15px"><a>No freeze</a></div>
<div class="c n" style="left:779px;top:440px;width:46px;height:16px;line-height:15px"><a>No freeze</a></div>
<div class="c n" style="left:830px;top:440px;width:47px;height:16px;line-height:15px"><a>No freeze</a></div>
<div class="c n" style="left:878px;top:440px;width:47px;height:16px;line-height:15px"><a>No freeze</a></div>
<div class="c n" style="left:925px;top:440px;width:47px;height:16px;line-height:15px"><a>No freeze</a></div>
<div class="c n" style="left:973px;top:440px;width:47px;height:16px;line-height:15px"><a>No freeze</a></div>
<div class="c n" style="left:1024px;top:440px;width:47px;height:16px;line-height:15px"><a>No freeze</a></div>
<div class="c n" style="left:1072px;top:440px;width:47px;height:16px;line-height:15px"><a>No freeze</a></div>
<div class="c n" style="left:1119px;top:440px;width:47px;height:16px;line-height:15px"><a>No freeze</a></div>
<div class="c n" style="left:1167px;top:440px;width:47px;height:16px;line-height:15px"><a>No freeze</a></div>
<div class="c n" style="left:1218px;top:440px;width:47px;height:16px;line-height:15px"><a>No freeze</a></div>
<div class="c n" style="left:1266px;top:440px;width:47px;height:16px;line-height:15px"><a>No freeze</a></div>
<div class="c n" style="left:1314px;top:440px;width:46px;height:16px;line-height:15px"><a>No freeze</a></div>
<div class="c n" style="left:1361px;top:440px;width:47px;height:16px;line-height:15px"><a>No freeze</a></div>
<div class="tl" style="left:12.5px;top:457px">02h45</div>
<div class="c n" style="left:54px;top:457px;width:46px;height:15px;line-height:14px"><a>No freeze</a></div>
<div class="c n" style="left:101px;top:457px;width:47px;height:15px;line-height:14px"><a>No freeze</a></div>
<div class="c n" style="left:149px;top:457px;width:47px;height:15px;line-height:14px"><a>No freeze</a></div>
<div class="c n" style="left:196px;top:457px;width:47px;height:15px;line-height:14px"><a>No freeze</a></div>
<div class="c n" style="left:248px;top:457px;width:47px;height:15px;line-height:14px"><a>No freeze</a></div>
<div class="c n" style="left:295px;top:457px;width:47px;height:15px;line-height:14px"><a>No freeze</a></div>
<div class="c n" style="left:343px;top:457px;width:47px;height:15px;line-height:14px"><a>No freeze</a></div>
<div class="c n" style="left:390px;top:457px;width:47px;height:15px;line-height:14px"><a>No freeze</a></div>
<div class="c n" style="left:442px;top:457px;width:47px;height:15px;line-height:14px"><a>No freeze</a></div>
<div class="c n" style="left:490px;top:457px;width:46px;height:15px;line-height:14px"><a>No freeze</a></div>
<div class="c n" style="left:537px;top:457px;width:47px;height:15px;line-height:14px"><a>No freeze</a></div>
<div class="c n" style="left:585px;top:457px;width:46px;height:15px;line-height:14px"><a>No freeze</a></div>
<div class="c n" style="left:636px;top:457px;width:47px;height:15px;line-height:14px"><a>No freeze</a></div>
<div class="c n" style="left:684px;top:457px;width:46px;height:15px;line-height:14px"><a>No freeze</a></div>
<div class="c n" style="left:731px;top:457px;width:47px;height:15px;line-height:14px"><a>No freeze</a></div>
<div class="c n" style="left:779px;top:457px;width:46px;height:15px;line-height:14px"><a>No freeze</a></div>
<div class="c n" style="left:830px;top:457px;width:47px;height:15px;line-height:14px"><a>No freeze</a></div>
<div class="c n" style="left:878px;top:457px;width:47px;height:15px;line-height:14px"><a>No freeze</a></div>
<div class="c n" style="left:925px;top:457px;width:47px;height:15px;line-height:14px"><a>No freeze</a></div>
<div class="c n" style="left:973px;top:457px;width:47px;height:15px;line-height:14px"><a>No freeze</a></div>
<div class="c n" style="left:1024px;top:457px;width:47px;height:15px;line-height:14px"><a>No freeze</a></div>
<div class="c n" style="left:1072px;top:457px;width:47px;height:15px;line-height:14px"><a>No freeze</a></div>
<div class="c n" style="left:1119px;top:457px;width:47px;height:15px;line-height:14px"><a>No freeze</a></div>
<div class="c n" style="left:1167px;top:457px;width:47px;height:15px;line-height:14px"><a>No freeze</a></div>
<div class="c n" style="left:1218px;top:457px;width:47px;height:15px;line-height:14px"><a>No freeze</a></div>
<div class="c n" style="left:1266px;top:457px;width:47px;height:15px;line-height:14px"><a>No freeze</a></div>
<div class="c n" style="left:1314px;top:457px;width:46px;height:15px;line-height:14px"><a>No freeze</a></div>
<div class="c n" style="left:1361px;top:457px;width:47px;height:15px;line-height:14px"><a>No freeze</a></div>
<div class="tl" style="left:12.5px;top:473px">03h00</div>
<div class="c n" style="left:54px;top:473px;width:46px;height:15px;line-height:14px"><a>No freeze</a></div>
<div class="c n" style="left:101px;top:473px;width:47px;height:15px;line-height:14px"><a>No freeze</a></div>
<div class="c n" style="left:149px;top:473px;width:47px;height:15px;line-height:14px"><a>No freeze</a></div>
<div class="c n" style="left:196px;top:473px;width:47px;height:15px;line-height:14px"><a>No freeze</a></div>
<div class="c n" style="left:248px;top:473px;width:47px;height:15px;line-height:14px"><a>No freeze</a></div>
<div class="c n" style="left:295px;top:473px;width:47px;height:15px;line-height:14px"><a>No freeze</a></div>
<div class="c n" style="left:343px;top:473px;width:47px;height:15px;line-height:14px"><a>No freeze</a></div>
<div class="c n" style="left:390px;top:473px;width:47px;height:15px;line-height:14px"><a>No freeze</a></div>
<div class="c n" style="left:442px;top:473px;width:47px;height:15px;line-height:14px"><a>No freeze</a></div>
<div class="c n" style="left:490px;top:473px;width:46px;height:15px;line-height:14px"><a>No freeze</a></div>
<div class="c n" style="left:537px;top:473px;width:47px;height:15px;line-height:14px"><a>No freeze</a></div>
<div class="c n" style="left:585px;top:473px;width:46px;height:15px;line-height:14px"><a>No freeze</a></div>
<div class="c n" style="left:636px;top:473px;width:47px;height:15px;line-height:14px"><a>No freeze</a></div>
<div class="c n" style="left:684px;top:473px;width:46px;height:15px;line-height:14px"><a>No freeze</a></div>
<div class="c n" style="left:731px;top:473px;width:47px;height:15px;line-height:14px"><a>No freeze</a></div>
<div class="c n" style="left:779px;top:473px;width:46px;height:15px;line-height:14px"><a>No freeze</a></div>
<div class="c n" style="left:830px;top:473px;width:47px;height:15px;line-height:14px"><a>No freeze</a></div>
<div class="c n" style="left:878px;top:473px;width:47px;height:15px;line-height:14px"><a>No freeze</a></div>
<div class="c n" style="left:925px;top:473px;width:47px;height:15px;line-height:14px"><a>No freeze</a></div>
<div class="c n" style="left:973px;top:473px;width:47px;height:15px;line-height:14px"><a>No freeze</a></div>
<div class="c n" style="left:1024px;top:473px;width:47px;height:15px;line-height:14px"><a>No freeze</a></div>
<div class="c n" style="left:1072px;top:473px;width:47px;height:15px;line-height:14px"><a>No freeze</a></div>
<div class="c n" style="left:1119px;top:473px;width:47px;height:15px;line-height:14px"><a>No freeze</a></div>
<div class="c n" style="left:1167px;top:473px;width:47px;height:15px;line-height:14px"><a>No freeze</a></div>
<div class="c n" style="left:1218px;top:473px;width:47px;height:15px;line-height:14px"><a>No freeze</a></div>
<div class="c n" style="left:1266px;top:473px;width:47px;height:15px;line-height:14px"><a>No freeze</a></div>
<div class="c n" style="left:1314px;top:473px;width:46px;height:15px;line-height:14px"><a>No freeze</a></div>
<div class="c n" style="left:1361px;top:473px;width:47px;height:15px;line-height:14px"><a>No freeze</a></div>
<div class="tl" style="left:12.5px;top:489px">03h15</div>
<div class="c n" style="left:54px;top:489px;width:46px;height:16px;line-height:15px"><a>No freeze</a></div>
<div class="c n" style="left:101px;top:489px;width:47px;height:16px;line-height:15px"><a>No freeze</a></div>
<div class="c n" style="left:149px;top:489px;width:47px;height:16px;line-height:15px"><a>No freeze</a></div>
<div class="c n" style="left:196px;top:489px;width:47px;height:16px;line-height:15px"><a>No freeze</a></div>
<div class="c n" style="left:248px;top:489px;width:47px;height:16px;line-height:15px"><a>No freeze</a></div>
<div class="c n" style="left:295px;top:489px;width:47px;height:16px;line-height:15px"><a>No freeze</a></div>
<div class="c n" style="left:343px;top:489px;width:47px;height:16px;line-height:15px"><a>No freeze</a></div>
<div class="c n" style="left:390px;top:489px;width:47px;height:16px;line-height:15px"><a>No freeze</a></div>
<div class="c n" style="left:442px;top:489px;width:47px;height:16px;line-height:15px"><a>No freeze</a></div>
<div class="c n" style="left:490px;top:489px;width:46px;height:16px;line-height:15px"><a>No freeze</a></div>
<div class="c n" style="left:537px;top:489px;width:47px;height:16px;line-height:15px"><a>No freeze</a></div>
<div class="c n" style="left:585px;top:489px;width:46px;height:16px;line-height:15px"><a>No freeze</a></div>
<div class="c n" style="left:636px;top:489px;width:47px;height:16px;line-height:15px"><a>No freeze</a></div>
<div class="c n" style="left:684px;top:489px;width:46px;height:16px;line-height:15px"><a>No freeze</a></div>
<div class="c n" style="left:731px;top:489px;width:47px;height:16px;line-height:15px"><a>No freeze</a></div>
<div class="c n" style="left:779px;top:489px;width:46px;height:16px;line-height:15px"><a>No freeze</a></div>
<div class="c n" style="left:830px;top:489px;width:47px;height:16px;line-height:15px"><a>No freeze</a></div>
<div class="c n" style="left:878px;top:489px;width:47px;height:16px;line-height:15px"><a>No freeze</a></div>
<div class="c n" style="left:925px;top:489px;width:47px;height:16px;line-height:15px"><a>No freeze</a></div>
<div class="c n" style="left:973px;top:489px;width:47px;height:16px;line-height:15px"><a>No freeze</a></div>
<div class="c n" style="left:1024px;top:489px;width:47px;height:16px;line-height:15px"><a>No freeze</a></div>
<div class="c n" style="left:1072px;top:489px;width:47px;height:16px;line-height:15px"><a>No freeze</a></div>
<div class="c n" style="left:1119px;top:489px;width:47px;height:16px;line-height:15px"><a>No freeze</a></div>
<div class="c n" style="left:1167px;top:489px;width:47px;height:16px;line-height:15px"><a>No freeze</a></div>
<div class="c n" style="left:1218px;top:489px;width:47px;height:16px;line-height:15px"><a>No freeze</a></div>
<div class="c n" style="left:1266px;top:489px;width:47px;height:16px;line-height:15px"><a>No freeze</a></div>
<div class="c n" style="left:1314px;top:489px;width:46px;height:16px;line-height:15px"><a>No freeze</a></div>
<div class="c n" style="left:1361px;top:489px;width:47px;height:16px;line-height:15px"><a>No freeze</a></div>
<div class="tl" style="left:12.5px;top:506px">03h30</div>
<div class="c n" style="left:54px;top:506px;width:46px;height:16px;line-height:15px"><a>No freeze</a></div>
<div class="c n" style="left:101px;top:506px;width:47px;height:16px;line-height:15px"><a>No freeze</a></div>
<div class="c n" style="left:149px;top:506px;width:47px;height:16px;line-height:15px"><a>No freeze</a></div>
<div class="c n" style="left:196px;top:506px;width:47px;height:16px;line-height:15px"><a>No freeze</a></div>
<div class="c n" style="left:248px;top:506px;width:47px;height:16px;line-height:15px"><a>No freeze</a></div>
<div class="c n" style="left:295px;top:506px;width:47px;height:16px;line-height:15px"><a>No freeze</a></div>
<div class="c n" style="left:343px;top:506px;width:47px;height:16px;line-height:15px"><a>No freeze</a></div>
<div class="c n" style="left:390px;top:506px;width:47px;height:16px;line-height:15px"><a>No freeze</a></div>
<div class="c n" style="left:442px;top:506px;width:47px;height:16px;line-height:15px"><a>No freeze</a></div>
<div class="c n" style="left:490px;top:506px;width:46px;height:16px;line-height:15px"><a>No freeze</a></div>
<div class="c n" style="left:537px;top:506px;width:47px;height:16px;line-height:15px"><a>No freeze</a></div>
<div class="c n" style="left:585px;top:506px;width:46px;height:16px;line-height:15px"><a>No freeze</a></div>
<div class="c n" style="left:636px;top:506px;width:47px;height:16px;line-height:15px"><a>No freeze</a></div>
<div class="c n" style="left:684px;top:506px;width:46px;height:16px;line-height:15px"><a>No freeze</a></div>
<div class="c n" style="left:731px;top:506px;width:47px;height:16px;line-height:15px"><a>No freeze</a></div>
<div class="c n" style="left:779px;top:506px;width:46px;height:16px;line-height:15px"><a>No freeze</a></div>
<div class="c n" style="left:830px;top:506px;width:47px;height:16px;line-height:15px"><a>No freeze</a></div>
<div class="c n" style="left:878px;top:506px;width:47px;height:16px;line-height:15px"><a>No freeze</a></div>
<div class="c n" style="left:925px;top:506px;width:47px;height:16px;line-height:15px"><a>No freeze</a></div>
<div class="c n" style="left:973px;top:506px;width:47px;height:16px;line-height:15px"><a>No freeze</a></div>
<div class="c n" style="left:1024px;top:506px;width:47px;height:16px;line-height:15px"><a>No freeze</a></div>
<div class="c n" style="left:1072px;top:506px;width:47px;height:16px;line-height:15px"><a>No freeze</a></div>
<div class="c n" style="left:1119px;top:506px;width:47px;height:16px;line-height:15px"><a>No freeze</a></div>
<div class="c n" style="left:1167px;top:506px;width:47px;height:16px;line-height:15px"><a>No freeze</a></div>
<div class="c n" style="left:1218px;top:506px;width:47px;height:16px;line-height:15px"><a>No freeze</a></div>
<div class="c n" style="left:1266px;top:506px;width:47px;height:16px;line-height:15px"><a>No freeze</a></div>
<div class="c n" style="left:1314px;top:506px;width:46px;height:16px;line-height:15px"><a>No freeze</a></div>
<div class="c n" style="left:1361px;top:506px;width:47px;height:16px;line-height:15px"><a>No freeze</a></div>
<div class="tl" style="left:12.5px;top:522px">03h45</div>
<div class="c n" style="left:54px;top:522px;width:46px;height:16px;line-height:15px"><a>No freeze</a></div>
<div class="c n" style="left:101px;top:522px;width:47px;height:16px;line-height:15px"><a>No freeze</a></div>
<div class="c n" style="left:149px;top:522px;width:47px;height:16px;line-height:15px"><a>No freeze</a></div>
<div class="c n" style="left:196px;top:522px;width:47px;height:16px;line-height:15px"><a>No freeze</a></div>
<div class="c n" style="left:248px;top:522px;width:47px;height:16px;line-height:15px"><a>No freeze</a></div>
<div class="c n" style="left:295px;top:522px;width:47px;height:16px;line-height:15px"><a>No freeze</a></div>
<div class="c n" style="left:343px;top:522px;width:47px;height:16px;line-height:15px"><a>No freeze</a></div>
<div class="c n" style="left:390px;top:522px;width:47px;height:16px;line-height:15px"><a>No freeze</a></div>
<div class="c n" style="left:442px;top:522px;width:47px;height:16px;line-height:15px"><a>No freeze</a></div>
<div class="c n" style="left:490px;top:522px;width:46px;height:16px;line-height:15px"><a>No freeze</a></div>
<div class="c n" style="left:537px;top:522px;width:47px;height:16px;line-height:15px"><a>No freeze</a></div>
<div class="c n" style="left:585px;top:522px;width:46px;height:16px;line-height:15px"><a>No freeze</a></div>
<div class="c n" style="left:636px;top:522px;width:47px;height:16px;line-height:15px"><a>No freeze</a></div>
<div class="c n" style="left:684px;top:522px;width:46px;height:16px;line-height:15px"><a>No freeze</a></div>
<div class="c n" style="left:731px;top:522px;width:47px;height:16px;line-height:15px"><a>No freeze</a></div>
<div class="c n" style="left:779px;top:522px;width:46px;height:16px;line-height:15px"><a>No freeze</a></div>
<div class="c n" style="left:830px;top:522px;width:47px;height:16px;line-height:15px"><a>No freeze</a></div>
<div class="c n" style="left:878px;top:522px;width:47px;height:16px;line-height:15px"><a>No freeze</a></div>
<div class="c n" style="left:925px;top:522px;width:47px;height:16px;line-height:15px"><a>No freeze</a></div>
<div class="c n" style="left:973px;top:522px;width:47px;height:16px;line-height:15px"><a>No freeze</a></div>
<div class="c n" style="left:1024px;top:522px;width:47px;height:16px;line-height:15px"><a>No freeze</a></div>
<div class="c n" style="left:1072px;top:522px;width:47px;height:16px;line-height:15px"><a>No freeze</a></div>
<div class="c n" style="left:1119px;top:522px;width:47px;height:16px;line-height:15px"><a>No freeze</a></div>
<div class="c n" style="left:1167px;top:522px;width:47px;height:16px;line-height:15px"><a>No freeze</a></div>
<div class="c n" style="left:1218px;top:522px;width:47px;height:16px;line-height:15px"><a>No freeze</a></div>
<div class="c n" style="left:1266px;top:522px;width:47px;height:16px;line-height:15px"><a>No freeze</a></div>
<div class="c n" style="left:1314px;top:522px;width:46px;height:16px;line-height:15px"><a>No freeze</a></div>
<div class="c n" style="left:1361px;top:522px;width:47px;height:16px;line-height:15px"><a>No freeze</a></div>
<div class="tl" style="left:12.5px;top:539px">04h00</div>
<div class="c n" style="left:54px;top:539px;width:46px;height:15px;line-height:14px"><a>No freeze</a></div>
<div class="c n" style="left:101px;top:539px;width:47px;height:15px;line-height:14px"><a>No freeze</a></div>
<div class="c n" style="left:149px;top:539px;width:47px;height:15px;line-height:14px"><a>No freeze</a></div>
<div class="c n" style="left:196px;top:539px;width:47px;height:15px;line-height:14px"><a>No freeze</a></div>
<div class="c n" style="left:248px;top:539px;width:47px;height:15px;line-height:14px"><a>No freeze</a></div>
<div class="c n" style="left:295px;top:539px;width:47px;height:15px;line-height:14px"><a>No freeze</a></div>
<div class="c n" style="left:343px;top:539px;width:47px;height:15px;line-height:14px"><a>No freeze</a></div>
<div class="c n" style="left:390px;top:539px;width:47px;height:15px;line-height:14px"><a>No freeze</a></div>
<div class="c n" style="left:442px;top:539px;width:47px;height:15px;line-height:14px"><a>No freeze</a></div>
<div class="c n" style="left:490px;top:539px;width:46px;height:15px;line-height:14px"><a>No freeze</a></div>
<div class="c n" style="left:537px;top:539px;width:47px;height:15px;line-height:14px"><a>No freeze</a></div>
<div class="c n" style="left:585px;top:539px;width:46px;height:15px;line-height:14px"><a>No freeze</a></div>
<div class="c n" style="left:636px;top:539px;width:47px;height:15px;line-height:14px"><a>No freeze</a></div>
<div class="c n" style="left:684px;top:539px;width:46px;height:15px;line-height:14px"><a>No freeze</a></div>
<div class="c n" style="left:731px;top:539px;width:47px;height:15px;line-height:14px"><a>No freeze</a></div>
<div class="c n" style="left:779px;top:539px;width:46px;height:15px;line-height:14px"><a>No freeze</a></div>
<div class="c n" style="left:830px;top:539px;width:47px;height:15px;line-height:14px"><a>No freeze</a></div>
<div class="c n" style="left:878px;top:539px;width:47px;height:15px;line-height:14px"><a>No freeze</a></div>
<div class="c n" style="left:925px;top:539px;width:47px;height:15px;line-height:14px"><a>No freeze</a></div>
<div class="c n" style="left:973px;top:539px;width:47px;height:15px;line-height:14px"><a>No freeze</a></div>
<div class="c n" style="left:1024px;top:539px;width:47px;height:15px;line-height:14px"><a>No freeze</a></div>
<div class="c n" style="left:1072px;top:539px;width:47px;height:15px;line-height:14px"><a>No freeze</a></div>
<div class="c n" style="left:1119px;top:539px;width:47px;height:15px;line-height:14px"><a>No freeze</a></div>
<div class="c n" style="left:1167px;top:539px;width:47px;height:15px;line-height:14px"><a>No freeze</a></div>
<div class="c n" style="left:1218px;top:539px;width:47px;height:15px;line-height:14px"><a>No freeze</a></div>
<div class="c n" style="left:1266px;top:539px;width:47px;height:15px;line-height:14px"><a>No freeze</a></div>
<div class="c n" style="left:1314px;top:539px;width:46px;height:15px;line-height:14px"><a>No freeze</a></div>
<div class="c n" style="left:1361px;top:539px;width:47px;height:15px;line-height:14px"><a>No freeze</a></div>
<div class="tl" style="left:12.5px;top:555px">04h15</div>
<div class="c n" style="left:54px;top:555px;width:46px;height:15px;line-height:14px"><a>No freeze</a></div>
<div class="c n" style="left:101px;top:555px;width:47px;height:15px;line-height:14px"><a>No freeze</a></div>
<div class="c n" style="left:149px;top:555px;width:47px;height:15px;line-height:14px"><a>No freeze</a></div>
<div class="c n" style="left:196px;top:555px;width:47px;height:15px;line-height:14px"><a>No freeze</a></div>
<div class="c n" style="left:248px;top:555px;width:47px;height:15px;line-height:14px"><a>No freeze</a></div>
<div class="c n" style="left:295px;top:555px;width:47px;height:15px;line-height:14px"><a>No freeze</a></div>
<div class="c n" style="left:343px;top:555px;width:47px;height:15px;line-height:14px"><a>No freeze</a></div>
<div class="c n" style="left:390px;top:555px;width:47px;height:15px;line-height:14px"><a>No freeze</a></div>
<div class="c n" style="left:442px;top:555px;width:47px;height:15px;line-height:14px"><a>No freeze</a></div>
<div class="c n" style="left:490px;top:555px;width:46px;height:15px;line-height:14px"><a>No freeze</a></div>
<div class="c n" style="left:537px;top:555px;width:47px;height:15px;line-height:14px"><a>No freeze</a></div>
<div class="c n" style="left:585px;top:555px;width:46px;height:15px;line-height:14px"><a>No freeze</a></div>
<div class="c n" style="left:636px;top:555px;width:47px;height:15px;line-height:14px"><a>No freeze</a></div>
<div class="c n" style="left:684px;top:555px;width:46px;height:15px;line-height:14px"><a>No freeze</a></div>
<div class="c n" style="left:731px;top:555px;width:47px;height:15px;line-height:14px"><a>No freeze</a></div>
<div class="c n" style="left:779px;top:555px;width:46px;height:15px;line-height:14px"><a>No freeze</a></div>
<div class="c n" style="left:830px;top:555px;width:47px;height:15px;line-height:14px"><a>No freeze</a></div>
<div class="c n" style="left:878px;top:555px;width:47px;height:15px;line-height:14px"><a>No freeze</a></div>
<div class="c n" style="left:925px;top:555px;width:47px;height:15px;line-height:14px"><a>No freeze</a></div>
<div class="c n" style="left:973px;top:555px;width:47px;height:15px;line-height:14px"><a>No freeze</a></div>
<div class="c n" style="left:1024px;top:555px;width:47px;height:15px;line-height:14px"><a>No freeze</a></div>
<div class="c n" style="left:1072px;top:555px;width:47px;height:15px;line-height:14px"><a>No freeze</a></div>
<div class="c n" style="left:1119px;top:555px;width:47px;height:15px;line-height:14px"><a>No freeze</a></div>
<div class="c n" style="left:1167px;top:555px;width:47px;height:15px;line-height:14px"><a>No freeze</a></div>
<div class="c n" style="left:1218px;top:555px;width:47px;height:15px;line-height:14px"><a>No freeze</a></div>
<div class="c n" style="left:1266px;top:555px;width:47px;height:15px;line-height:14px"><a>No freeze</a></div>
<div class="c n" style="left:1314px;top:555px;width:46px;height:15px;line-height:14px"><a>No freeze</a></div>
<div class="c n" style="left:1361px;top:555px;width:47px;height:15px;line-height:14px"><a>No freeze</a></div>
<div class="tl" style="left:12.5px;top:571px">04h30</div>
<div class="c n" style="left:54px;top:571px;width:46px;height:16px;line-height:15px"><a>No freeze</a></div>
<div class="c n" style="left:101px;top:571px;width:47px;height:16px;line-height:15px"><a>No freeze</a></div>
<div class="c n" style="left:149px;top:571px;width:47px;height:16px;line-height:15px"><a>No freeze</a></div>
<div class="c n" style="left:196px;top:571px;width:47px;height:16px;line-height:15px"><a>No freeze</a></div>
<div class="c n" style="left:248px;top:571px;width:47px;height:16px;line-height:15px"><a>No freeze</a></div>
<div class="c n" style="left:295px;top:571px;width:47px;height:16px;line-height:15px"><a>No freeze</a></div>
<div class="c n" style="left:343px;top:571px;width:47px;height:16px;line-height:15px"><a>No freeze</a></div>
<div class="c n" style="left:390px;top:571px;width:47px;height:16px;line-height:15px"><a>No freeze</a></div>
<div class="c n" style="left:442px;top:571px;width:47px;height:16px;line-height:15px"><a>No freeze</a></div>
<div class="c n" style="left:490px;top:571px;width:46px;height:16px;line-height:15px"><a>No freeze</a></div>
<div class="c n" style="left:537px;top:571px;width:47px;height:16px;line-height:15px"><a>No freeze</a></div>
<div class="c n" style="left:585px;top:571px;width:46px;height:16px;line-height:15px"><a>No freeze</a></div>
<div class="c n" style="left:636px;top:571px;width:47px;height:16px;line-height:15px"><a>No freeze</a></div>
<div class="c n" style="left:684px;top:571px;width:46px;height:16px;line-height:15px"><a>No freeze</a></div>
<div class="c n" style="left:731px;top:571px;width:47px;height:16px;line-height:15px"><a>No freeze</a></div>
<div class="c n" style="left:779px;top:571px;width:46px;height:16px;line-height:15px"><a>No freeze</a></div>
<div class="c n" style="left:830px;top:571px;width:47px;height:16px;line-height:15px"><a>No freeze</a></div>
<div class="c n" style="left:878px;top:571px;width:47px;height:16px;line-height:15px"><a>No freeze</a></div>
<div class="c n" style="left:925px;top:571px;width:47px;height:16px;line-height:15px"><a>No freeze</a></div>
<div class="c n" style="left:973px;top:571px;width:47px;height:16px;line-height:15px"><a>No freeze</a></div>
<div class="c n" style="left:1024px;top:571px;width:47px;height:16px;line-height:15px"><a>No freeze</a></div>
<div class="c n" style="left:1072px;top:571px;width:47px;height:16px;line-height:15px"><a>No freeze</a></div>
<div class="c n" style="left:1119px;top:571px;width:47px;height:16px;line-height:15px"><a>No freeze</a></div>
<div class="c n" style="left:1167px;top:571px;width:47px;height:16px;line-height:15px"><a>No freeze</a></div>
<div class="c n" style="left:1218px;top:571px;width:47px;height:16px;line-height:15px"><a>No freeze</a></div>
<div class="c n" style="left:1266px;top:571px;width:47px;height:16px;line-height:15px"><a>No freeze</a></div>
<div class="c n" style="left:1314px;top:571px;width:46px;height:16px;line-height:15px"><a>No freeze</a></div>
<div class="c n" style="left:1361px;top:571px;width:47px;height:16px;line-height:15px"><a>No freeze</a></div>
<div class="tl" style="left:12.5px;top:588px">04h45</div>
<div class="c n" style="left:54px;top:588px;width:46px;height:16px;line-height:15px"><a>No freeze</a></div>
<div class="c n" style="left:101px;top:588px;width:47px;height:16px;line-height:15px"><a>No freeze</a></div>
<div class="c n" style="left:149px;top:588px;width:47px;height:16px;line-height:15px"><a>No freeze</a></div>
<div class="c n" style="left:196px;top:588px;width:47px;height:16px;line-height:15px"><a>No freeze</a></div>
<div class="c n" style="left:248px;top:588px;width:47px;height:16px;line-height:15px"><a>No freeze</a></div>
<div class="c n" style="left:295px;top:588px;width:47px;height:16px;line-height:15px"><a>No freeze</a></div>
<div class="c n" style="left:343px;top:588px;width:47px;height:16px;line-height:15px"><a>No freeze</a></div>
<div class="c n" style="left:390px;top:588px;width:47px;height:16px;line-height:15px"><a>No freeze</a></div>
<div class="c n" style="left:442px;top:588px;width:47px;height:16px;line-height:15px"><a>No freeze</a></div>
<div class="c n" style="left:490px;top:588px;width:46px;height:16px;line-height:15px"><a>No freeze</a></div>
<div class="c n" style="left:537px;top:588px;width:47px;height:16px;line-height:15px"><a>No freeze</a></div>
<div class="c n" style="left:585px;top:588px;width:46px;height:16px;line-height:15px"><a>No freeze</a></div>
<div class="c n" style="left:636px;top:588px;width:47px;height:16px;line-height:15px"><a>No freeze</a></div>
<div class="c n" style="left:684px;top:588px;width:46px;height:16px;line-height:15px"><a>No freeze</a></div>
<div class="c n" style="left:731px;top:588px;width:47px;height:16px;line-height:15px"><a>No freeze</a></div>
<div class="c n" style="left:779px;top:588px;width:46px;height:16px;line-height:15px"><a>No freeze</a></div>
<div class="c n" style="left:830px;top:588px;width:47px;height:16px;line-height:15px"><a>No freeze</a></div>
<div class="c n" style="left:878px;top:588px;width:47px;height:16px;line-height:15px"><a>No freeze</a></div>
<div class="c n" style="left:925px;top:588px;width:47px;height:16px;line-height:15px"><a>No freeze</a></div>
<div class="c n" style="left:973px;top:588px;width:47px;height:16px;line-height:15px"><a>No freeze</a></div>
<div class="c n" style="left:1024px;top:588px;width:47px;height:16px;line-height:15px"><a>No freeze</a></div>
<div class="c n" style="left:1072px;top:588px;width:47px;height:16px;line-height:15px"><a>No freeze</a></div>
<div class="c n" style="left:1119px;top:588px;width:47px;height:16px;line-height:15px"><a>No freeze</a></div>
<div class="c n" style="left:1167px;top:588px;width:47px;height:16px;line-height:15px"><a>No freeze</a></div>
<div class="c n" style="left:1218px;top:588px;width:47px;height:16px;line-height:15px"><a>No freeze</a></div>
<div class="c n" style="left:1266px;top:588px;width:47px;height:16px;line-height:15px"><a>No freeze</a></div>
<div class="c n" style="left:1314px;top:588px;width:46px;height:16px;line-height:15px"><a>No freeze</a></div>
<div class="c n" style="left:1361px;top:588px;width:47px;height:16px;line-height:15px"><a>No freeze</a></div>
<div class="tl" style="left:12.5px;top:604px">05h00</div>
<div class="c p" style="left:54px;top:604px;width:46px;height:16px;line-height:15px"><a>COMFORT</a></div>
<div class="c e" style="left:101px;top:604px;width:47px;height:16px;line-height:15px"><a>ECO</a></div>
<div class="c e" style="left:149px;top:604px;width:47px;height:16px;line-height:15px"><a>ECO</a></div>
<div class="c e" style="left:196px;top:604px;width:47px;height:16px;line-height:15px"><a>ECO</a></div>
<div class="c p" style="left:248px;top:604px;width:47px;height:16px;line-height:15px"><a>COMFORT</a></div>
<div class="c e" style="left:295px;top:604px;width:47px;height:16px;line-height:15px"><a>ECO</a></div>
<div class="c e" style="left:343px;top:604px;width:47px;height:16px;line-height:15px"><a>ECO</a></div>
<div class="c e" style="left:390px;top:604px;width:47px;height:16px;line-height:15px"><a>ECO</a></div>
<div class="c p" style="left:442px;top:604px;width:47px;height:16px;line-height:15px"><a>COMFORT</a></div>
<div class="c e" style="left:490px;top:604px;width:46px;height:16px;line-height:15px"><a>ECO</a></div>
<div class="c e" style="left:537px;top:604px;width:47px;height:16px;line-height:15px"><a>ECO</a></div>
<div class="c e" style="left:585px;top:604px;width:46px;height:16px;line-height:15px"><a>ECO</a></div>
<div class="c p" style="left:636px;top:604px;width:47px;height:16px;line-height:15px"><a>COMFORT</a></div>
<div class="c e" style="left:684px;top:604px;width:46px;height:16px;line-height:15px"><a>ECO</a></div>
<div class="c e" style="left:731px;top:604px;width:47px;height:16px;line-height:15px"><a>ECO</a></div>
<div class="c e" style="left:779px;top:604px;width:46px;height:16px;line-height:15px"><a>ECO</a></div>
<div class="c e" style="left:830px;top:604px;width:47px;height:16px;line-height:15px"><a>ECO</a></div>
<div class="c e" style="left:878px;top:604px;width:47px;height:16px;line-height:15px"><a>ECO</a></div>
<div class="c e" style="left:925px;top:604px;width:47px;height:16px;line-height:15px"><a>ECO</a></div>
<div class="c n" style="left:973px;top:604px;width:47px;height:16px;line-height:15px"><a>No freeze</a></div>
<div class="c e" style="left:1024px;top:604px;width:47px;height:16px;line-height:15px"><a>ECO</a></div>
<div class="c e" style="left:1072px;top:604px;width:47px;height:16px;line-height:15px"><a>ECO</a></div>
<div class="c e" style="left:1119px;top:604px;width:47px;height:16px;line-height:15px"><a>ECO</a></div>
<div class="c n" style="left:1167px;top:604px;width:47px;height:16px;line-height:15px"><a>No freeze</a></div>
<div class="c e" style="left:1218px;top:604px;width:47px;height:16px;line-height:15px"><a>ECO</a></div>
<div class="c e" style="left:1266px;top:604px;width:47px;height:16px;line-height:15px"><a>ECO</a></div>
<div class="c e" style="left:1314px;top:604px;width:46px;height:16px;line-height:15px"><a>ECO</a></div>
<div class="c n" style="left:1361px;top:604px;width:47px;height:16px;line-height:15px"><a>No freeze</a></div>
<div class="tl" style="left:12.5px;top:621px">05h15</div>
<div class="c p" style="left:54px;top:621px;width:46px;height:15px;line-height:14px"><a>COMFORT</a></div>
<div class="c e" style="left:101px;top:621px;width:47px;height:15px;line-height:14px"><a>ECO</a></div>
<div class="c e" style="left:149px;top:621px;width:47px;height:15px;line-height:14px"><a>ECO</a></div>
<div class="c e" style="left:196px;top:621px;width:47px;height:15px;line-height:14px"><a>ECO</a></div>
<div class="c p" style="left:248px;top:621px;width:47px;height:15px;line-height:14px"><a>COMFORT</a></div>
<div class="c e" style="left:295px;top:621px;width:47px;height:15px;line-height:14px"><a>ECO</a></div>
<div class="c e" style="left:343px;top:621px;width:47px;height:15px;line-height:14px"><a>ECO</a></div>
<div class="c e" style="left:390px;top:621px;width:47px;height:15px;line-height:14px"><a>ECO</a></div>
<div class="c p" style="left:442px;top:621px;width:47px;height:15px;line-height:14px"><a>COMFORT</a></div>
<div class="c e" style="left:490px;top:621px;width:46px;height:15px;line-height:14px"><a>ECO</a></div>
<div class="c e" style="left:537px;top:621px;width:47px;height:15px;line-height:14px"><a>ECO</a></div>
<div class="c e" style="left:585px;top:621px;width:46px;height:15px;line-height:14px"><a>ECO</a></div>
<div class="c p" style="left:636px;top:621px;width:47px;height:15px;line-height:14px"><a>COMFORT</a></div>
<div class="c e" style="left:684px;top:621px;width:46px;height:15px;line-height:14px"><a>ECO</a></div>
<div class="c e" style="left:731px;top:621px;width:47px;height:15px;line-height:14px"><a>ECO</a></div>
<div class="c e" style="left:779px;top:621px;width:46px;height:15px;line-height:14px"><a>ECO</a></div>
<div class="c e" style="left:830px;top:621px;width:47px;height:15px;line-height:14px"><a>ECO</a></div>
<div class="c e" style="left:878px;top:621px;width:47px;height:15px;line-height:14px"><a>ECO</a></div>
<div class="c e" style="left:925px;top:621px;width:47px;height:15px;line-height:14px"><a>ECO</a></div>
<div class="c n" style="left:973px;top:621px;width:47px;height:15px;line-height:14px"><a>No freeze</a></div>
<div class="c e" style="left:1024px;top:621px;width:47px;height:15px;line-height:14px"><a>ECO</a></div>
<div class="c e" style="left:1072px;top:621px;width:47px;height:15px;line-height:14px"><a>ECO</a></div>
<div class="c e" style="left:1119px;top:621px;width:47px;height:15px;line-height:14px"><a>ECO</a></div>
<div class="c n" style="left:1167px;top:621px;width:47px;height:15px;line-height:14px"><a>No freeze</a></div>
<div class="c e" style="left:1218px;top:621px;width:47px;height:15px;line-height:14px"><a>ECO</a></div>
<div class="c e" style="left:1266px;top:621px;width:47px;height:15px;line-height:14px"><a>ECO</a></div>
<div class="c e" style="left:1314px;top:621px;width:46px;height:15px;line-height:14px"><a>ECO</a></div>
<div class="c n" style="left:1361px;top:621px;width:47px;height:15px;line-height:14px"><a>No freeze</a></div>
<div class="tl" style="left:12.5px;top:637px">05h30</div>
<div class="c p" style="left:54px;top:637px;width:46px;height:15px;line-height:14px"><a>COMFORT</a></div>
<div class="c p" style="left:101px;top:637px;width:47px;height:15px;line-height:14px"><a>COMFORT</a></div>
<div class="c p" style="left:149px;top:637px;width:47px;height:15px;line-height:14px"><a>COMFORT</a></div>
<div class="c p" style="left:196px;top:637px;width:47px;height:15px;line-height:14px"><a>COMFORT</a></div>
<div class="c p" style="left:248px;top:637px;width:47px;height:15px;line-height:14px"><a>COMFORT</a></div>
<div class="c p" style="left:295px;top:637px;width:47px;height:15px;line-height:14px"><a>COMFORT</a></div>
<div class="c p" style="left:343px;top:637px;width:47px;height:15px;line-height:14px"><a>COMFORT</a></div>
<div class="c p" style="left:390px;top:637px;width:47px;height:15px;line-height:14px"><a>COMFORT</a></div>
<div class="c p" style="left:442px;top:637px;width:47px;height:15px;line-height:14px"><a>COMFORT</a></div>
<div class="c p" style="left:490px;top:637px;width:46px;height:15px;line-height:14px"><a>COMFORT</a></div>
<div class="c p" style="left:537px;top:637px;width:47px;height:15px;line-height:14px"><a>COMFORT</a></div>
<div class="c p" style="left:585px;top:637px;width:46px;height:15px;line-height:14px"><a>COMFORT</a></div>
<div class="c p" style="left:636px;top:637px;width:47px;height:15px;line-height:14px"><a>COMFORT</a></div>
<div class="c p" style="left:684px;top:637px;width:46px;height:15px;line-height:14px"><a>COMFORT</a></div>
<div class="c p" style="left:731px;top:637px;width:47px;height:15px;line-height:14px"><a>COMFORT</a></div>
<div class="c p" style="left:779px;top:637px;width:46px;height:15px;line-height:14px"><a>COMFORT</a></div>
<div class="c e" style="left:830px;top:637px;width:47px;height:15px;line-height:14px"><a>ECO</a></div>
<div class="c e" style="left:878px;top:637px;width:47px;height:15px;line-height:14px"><a>ECO</a></div>
<div class="c e" style="left:925px;top:637px;width:47px;height:15px;line-height:14px"><a>ECO</a></div>
<div class="c e" style="left:973px;top:637px;width:47px;height:15px;line-height:14px"><a>ECO</a></div>
<div class="c e" style="left:1024px;top:637px;width:47px;height:15px;line-height:14px"><a>ECO</a></div>
<div class="c e" style="left:1072px;top:637px;width:47px;height:15px;line-height:14px"><a>ECO</a></div>
<div class="c e" style="left:1119px;top:637px;width:47px;height:15px;line-height:14px"><a>ECO</a></div>
<div class="c n" style="left:1167px;top:637px;width:47px;height:15px;line-height:14px"><a>No freeze</a></div>
<div class="c e" style="left:1218px;top:637px;width:47px;height:15px;line-height:14px"><a>ECO</a></div>
<div class="c e" style="left:1266px;top:637px;width:47px;height:15px;line-height:14px"><a>ECO</a></div>
<div class="c e" style="left:1314px;top:637px;width:46px;height:15px;line-height:14px"><a>ECO</a></div>
<div class="c n" style="left:1361px;top:637px;width:47px;height:15px;line-height:14px"><a>No freeze</a></div>
<div class="tl" style="left:12.5px;top:653px">05h45</div>
<div class="c p" style="left:54px;top:653px;width:46px;height:16px;line-height:15px"><a>COMFORT</a></div>
<div class="c p" style="left:101px;top:653px;width:47px;height:16px;line-height:15px"><a>COMFORT</a></div>
<div class="c p" style="left:149px;top:653px;width:47px;height:16px;line-height:15px"><a>COMFORT</a></div>
<div class="c p" style="left:196px;top:653px;width:47px;height:16px;line-height:15px"><a>COMFORT</a></div>
<div class="c p" style="left:248px;top:653px;width:47px;height:16px;line-height:15px"><a>COMFORT</a></div>
<div class="c p" style="left:295px;top:653px;width:47px;height:16px;line-height:15px"><a>COMFORT</a></div>
<div class="c p" style="left:343px;top:653px;width:47px;height:16px;line-height:15px"><a>COMFORT</a></div>
<div class="c p" style="left:390px;top:653px;width:47px;height:16px;line-height:15px"><a>COMFORT</a></div>
<div class="c p" style="left:442px;top:653px;width:47px;height:16px;line-height:15px"><a>COMFORT</a></div>
<div class="c p" style="left:490px;top:653px;width:46px;height:16px;line-height:15px"><a>COMFORT</a></div>
<div class="c p" style="left:537px;top:653px;width:47px;height:16px;line-height:15px"><a>COMFORT</a></div>
<div class="c p" style="left:585px;top:653px;width:46px;height:16px;line-height:15px"><a>COMFORT</a></div>
<div class="c p" style="left:636px;top:653px;width:47px;height:16px;line-height:15px"><a>COMFORT</a></div>
<div class="c p" style="left:684px;top:653px;width:46px;height:16px;line-height:15px"><a>COMFORT</a></div>
<div class="c p" style="left:731px;top:653px;width:47px;height:16px;line-height:15px"><a>COMFORT</a></div>
<div class="c p" style="left:779px;top:653px;width:46px;height:16px;line-height:15px"><a>COMFORT</a></div>
<div class="c e" style="left:830px;top:653px;width:47px;height:16px;line-height:15px"><a>ECO</a></div>
<div class="c e" style="left:878px;top:653px;width:47px;height:16px;line-height:15px"><a>ECO</a></div>
<div class="c e" style="left:925px;top:653px;width:47px;height:16px;line-height:15px"><a>ECO</a></div>
<div class="c e" style="left:973px;top:653px;width:47px;height:16px;line-height:15px"><a>ECO</a></div>
<div class="c e" style="left:1024px;top:653px;width:47px;height:16px;line-height:15px"><a>ECO</a></div>
<div class="c e" style="left:1072px;top:653px;width:47px;height:16px;line-height:15px"><a>ECO</a></div>
<div class="c e" style="left:1119px;top:653px;width:47px;height:16px;line-height:15px"><a>ECO</a></div>
<div class="c n" style="left:1167px;top:653px;width:47px;height:16px;line-height:15px"><a>No freeze</a></div>
<div class="c e" style="left:1218px;top:653px;width:47px;height:16px;line-height:15px"><a>ECO</a></div>
<div class="c e" style="left:1266px;top:653px;width:47px;height:16px;line-height:15px"><a>ECO</a></div>
<div class="c e" style="left:1314px;top:653px;width:46px;height:16px;line-height:15px"><a>ECO</a></div>
<div class="c n" style="left:1361px;top:653px;width:47px;height:16px;line-height:15px"><a>No freeze</a></div>
<div class="tl" style="left:12.5px;top:670px">06h00</div>
<div class="c p" style="left:54px;top:670px;width:46px;height:16px;line-height:15px"><a>COMFORT</a></div>
<div class="c p" style="left:101px;top:670px;width:47px;height:16px;line-height:15px"><a>COMFORT</a></div>
<div class="c p" style="left:149px;top:670px;width:47px;height:16px;line-height:15px"><a>COMFORT</a></div>
<div class="c p" style="left:196px;top:670px;width:47px;height:16px;line-height:15px"><a>COMFORT</a></div>
<div class="c p" style="left:248px;top:670px;width:47px;height:16px;line-height:15px"><a>COMFORT</a></div>
<div class="c p" style="left:295px;top:670px;width:47px;height:16px;line-height:15px"><a>COMFORT</a></div>
<div class="c p" style="left:343px;top:670px;width:47px;height:16px;line-height:15px"><a>COMFORT</a></div>
<div class="c p" style="left:390px;top:670px;width:47px;height:16px;line-height:15px"><a>COMFORT</a></div>
<div class="c p" style="left:442px;top:670px;width:47px;height:16px;line-height:15px"><a>COMFORT</a></div>
<div class="c p" style="left:490px;top:670px;width:46px;height:16px;line-height:15px"><a>COMFORT</a></div>
<div class="c p" style="left:537px;top:670px;width:47px;height:16px;line-height:15px"><a>COMFORT</a></div>
<div class="c p" style="left:585px;top:670px;width:46px;height:16px;line-height:15px"><a>COMFORT</a></div>
<div class="c p" style="left:636px;top:670px;width:47px;height:16px;line-height:15px"><a>COMFORT</a></div>
<div class="c p" style="left:684px;top:670px;width:46px;height:16px;line-height:15px"><a>COMFORT</a></div>
<div class="c p" style="left:731px;top:670px;width:47px;height:16px;line-height:15px"><a>COMFORT</a></div>
<div class="c p" style="left:779px;top:670px;width:46px;height:16px;line-height:15px"><a>COMFORT</a></div>
<div class="c e" style="left:830px;top:670px;width:47px;height:16px;line-height:15px"><a>ECO</a></div>
<div class="c e" style="left:878px;top:670px;width:47px;height:16px;line-height:15px"><a>ECO</a></div>
<div class="c e" style="left:925px;top:670px;width:47px;height:16px;line-height:15px"><a>ECO</a></div>
<div class="c p" style="left:973px;top:670px;width:47px;height:16px;line-height:15px"><a>COMFORT</a></div>
<div class="c e" style="left:1024px;top:670px;width:47px;height:16px;line-height:15px"><a>ECO</a></div>
<div class="c e" style="left:1072px;top:670px;width:47px;height:16px;line-height:15px"><a>ECO</a></div>
<div class="c e" style="left:1119px;top:670px;width:47px;height:16px;line-height:15px"><a>ECO</a></div>
<div class="c n" style="left:1167px;top:670px;width:47px;height:16px;line-height:15px"><a>No freeze</a></div>
<div class="c e" style="left:1218px;top:670px;width:47px;height:16px;line-height:15px"><a>ECO</a></div>
<div class="c e" style="left:1266px;top:670px;width:47px;height:16px;line-height:15px"><a>ECO</a></div>
<div class="c e" style="left:1314px;top:670px;width:46px;height:16px;line-height:15px"><a>ECO</a></div>
<div class="c n" style="left:1361px;top:670px;width:47px;height:16px;line-height:15px"><a>No freeze</a></div>
<div class="tl" style="left:12.5px;top:686px">06h15</div>
<div class="c p" style="left:54px;top:686px;width:46px;height:16px;line-height:15px"><a>COMFORT</a></div>
<div class="c p" style="left:101px;top:686px;width:47px;height:16px;line-height:15px"><a>COMFORT</a></div>
<div class="c p" style="left:149px;top:686px;width:47px;height:16px;line-height:15px"><a>COMFORT</a></div>
<div class="c p" style="left:196px;top:686px;width:47px;height:16px;line-height:15px"><a>COMFORT</a></div>
<div class="c p" style="left:248px;top:686px;width:47px;height:16px;line-height:15px"><a>COMFORT</a></div>
<div class="c p" style="left:295px;top:686px;width:47px;height:16px;line-height:15px"><a>COMFORT</a></div>
<div class="c p" style="left:343px;top:686px;width:47px;height:16px;line-height:15px"><a>COMFORT</a></div>
<div class="c p" style="left:390px;top:686px;width:47px;height:16px;line-height:15px"><a>COMFORT</a></div>
<div class="c p" style="left:442px;top:686px;width:47px;height:16px;line-height:15px"><a>COMFORT</a></div>
<div class="c p" style="left:490px;top:686px;width:46px;height:16px;line-height:15px"><a>COMFORT</a></div>
<div class="c p" style="left:537px;top:686px;width:47px;height:16px;line-height:15px"><a>COMFORT</a></div>
<div class="c p" style="left:585px;top:686px;width:46px;height:16px;line-height:15px"><a>COMFORT</a></div>
<div class="c p" style="left:636px;top:686px;width:47px;height:16px;line-height:15px"><a>COMFORT</a></div>
<div class="c p" style="left:684px;top:686px;width:46px;height:16px;line-height:15px"><a>COMFORT</a></div>
<div class="c p" style="left:731px;top:686px;width:47px;height:16px;line-height:15px"><a>COMFORT</a></div>
<div class="c p" style="left:779px;top:686px;width:46px;height:16px;line-height:15px"><a>COMFORT</a></div>
<div class="c e" style="left:830px;top:686px;width:47px;height:16px;line-height:15px"><a>ECO</a></div>
<div class="c e" style="left:878px;top:686px;width:47px;height:16px;line-height:15px"><a>ECO</a></div>
<div class="c e" style="left:925px;top:686px;width:47px;height:16px;line-height:15px"><a>ECO</a></div>
<div class="c p" style="left:973px;top:686px;width:47px;height:16px;line-height:15px"><a>COMFORT</a></div>
<div class="c e" style="left:1024px;top:686px;width:47px;height:16px;line-height:15px"><a>ECO</a></div>
<div class="c e" style="left:1072px;top:686px;width:47px;height:16px;line-height:15px"><a>ECO</a></div>
<div class="c e" style="left:1119px;top:686px;width:47px;height:16px;line-height:15px"><a>ECO</a></div>
<div class="c n" style="left:1167px;top:686px;width:47px;height:16px;line-height:15px"><a>No freeze</a></div>
<div class="c e" style="left:1218px;top:686px;width:47px;height:16px;line-height:15px"><a>ECO</a></div>
<div class="c e" style="left:1266px;top:686px;width:47px;height:16px;line-height:15px"><a>ECO</a></div>
<div class="c e" style="left:1314px;top:686px;width:46px;height:16px;line-height:15px"><a>ECO</a></div>
<div class="c n" style="left:1361px;top:686px;width:47px;height:16px;line-height:15px"><a>No freeze</a></div>
<div class="tl" style="left:12.5px;top:703px">06h30</div>
<div class="c p" style="left:54px;top:703px;width:46px;height:15px;line-height:14px"><a>COMFORT</a></div>
<div class="c p" style="left:101px;top:703px;width:47px;height:15px;line-height:14px"><a>COMFORT</a></div>
<div class="c p" style="left:149px;top:703px;width:47px;height:15px;line-height:14px"><a>COMFORT</a></div>
<div class="c p" style="left:196px;top:703px;width:47px;height:15px;line-height:14px"><a>COMFORT</a></div>
<div class="c p" style="left:248px;top:703px;width:47px;height:15px;line-height:14px"><a>COMFORT</a></div>
<div class="c p" style="left:295px;top:703px;width:47px;height:15px;line-height:14px"><a>COMFORT</a></div>
<div class="c p" style="left:343px;top:703px;width:47px;height:15px;line-height:14px"><a>COMFORT</a></div>
<div class="c p" style="left:390px;top:703px;width:47px;height:15px;line-height:14px"><a>COMFORT</a></div>
<div class="c p" style="left:442px;top:703px;width:47px;height:15px;line-height:14px"><a>COMFORT</a></div>
<div class="c p" style="left:490px;top:703px;width:46px;height:15px;line-height:14px"><a>COMFORT</a></div>
<div class="c p" style="left:537px;top:703px;width:47px;height:15px;line-height:14px"><a>COMFORT</a></div>
<div class="c p" style="left:585px;top:703px;width:46px;height:15px;line-height:14px"><a>COMFORT</a></div>
<div class="c p" style="left:636px;top:703px;width:47px;height:15px;line-height:14px"><a>COMFORT</a></div>
<div class="c p" style="left:684px;top:703px;width:46px;height:15px;line-height:14px"><a>COMFORT</a></div>
<div class="c p" style="left:731px;top:703px;width:47px;height:15px;line-height:14px"><a>COMFORT</a></div>
<div class="c p" style="left:779px;top:703px;width:46px;height:15px;line-height:14px"><a>COMFORT</a></div>
<div class="c p" style="left:830px;top:703px;width:47px;height:15px;line-height:14px"><a>COMFORT</a></div>
<div class="c p" style="left:878px;top:703px;width:47px;height:15px;line-height:14px"><a>COMFORT</a></div>
<div class="c p" style="left:925px;top:703px;width:47px;height:15px;line-height:14px"><a>COMFORT</a></div>
<div class="c p" style="left:973px;top:703px;width:47px;height:15px;line-height:14px"><a>COMFORT</a></div>
<div class="c p" style="left:1024px;top:703px;width:47px;height:15px;line-height:14px"><a>COMFORT</a></div>
<div class="c p" style="left:1072px;top:703px;width:47px;height:15px;line-height:14px"><a>COMFORT</a></div>
<div class="c e" style="left:1119px;top:703px;width:47px;height:15px;line-height:14px"><a>ECO</a></div>
<div class="c n" style="left:1167px;top:703px;width:47px;height:15px;line-height:14px"><a>No freeze</a></div>
<div class="c p" style="left:1218px;top:703px;width:47px;height:15px;line-height:14px"><a>COMFORT</a></div>
<div class="c e" style="left:1266px;top:703px;width:47px;height:15px;line-height:14px"><a>ECO</a></div>
<div class="c e" style="left:1314px;top:703px;width:46px;height:15px;line-height:14px"><a>ECO</a></div>
<div class="c n" style="left:1361px;top:703px;width:47px;height:15px;line-height:14px"><a>No freeze</a></div>
<div class="tl" style="left:12.5px;top:719px">06h45</div>
<div class="c p" style="left:54px;top:719px;width:46px;height:15px;line-height:14px"><a>COMFORT</a></div>
<div class="c p" style="left:101px;top:719px;width:47px;height:15px;line-height:14px"><a>COMFORT</a></div>
<div class="c p" style="left:149px;top:719px;width:47px;height:15px;line-height:14px"><a>COMFORT</a></div>
<div class="c p" style="left:196px;top:719px;width:47px;height:15px;line-height:14px"><a>COMFORT</a></div>
<div class="c p" style="left:248px;top:719px;width:47px;height:15px;line-height:14px"><a>COMFORT</a></div>
<div class="c p" style="left:295px;top:719px;width:47px;height:15px;line-height:14px"><a>COMFORT</a></div>
<div class="c p" style="left:343px;top:719px;width:47px;height:15px;line-height:14px"><a>COMFORT</a></div>
<div class="c p" style="left:390px;top:719px;width:47px;height:15px;line-height:14px"><a>COMFORT</a></div>
<div class="c p" style="left:442px;top:719px;width:47px;height:15px;line-height:14px"><a>COMFORT</a></div>
<div class="c p" style="left:490px;top:719px;width:46px;height:15px;line-height:14px"><a>COMFORT</a></div>
<div class="c p" style="left:537px;top:719px;width:47px;height:15px;line-height:14px"><a>COMFORT</a></div>
<div class="c p" style="left:585px;top:719px;width:46px;height:15px;line-height:14px"><a>COMFORT</a></div>
<div class="c p" style="left:636px;top:719px;width:47px;height:15px;line-height:14px"><a>COMFORT</a></div>
<div class="c p" style="left:684px;top:719px;width:46px;height:15px;line-height:14px"><a>COMFORT</a></div>
<div class="c p" style="left:731px;top:719px;width:47px;height:15px;line-height:14px"><a>COMFORT</a></div>
<div class="c p" style="left:779px;top:719px;width:46px;height:15px;line-height:14px"><a>COMFORT</a></div>
<div class="c p" style="left:830px;top:719px;width:47px;height:15px;line-height:14px"><a>COMFORT</a></div>
<div class="c p" style="left:878px;top:719px;width:47px;height:15px;line-height:14px"><a>COMFORT</a></div>
<div class="c p" style="left:925px;top:719px;width:47px;height:15px;line-height:14px"><a>COMFORT</a></div>
<div class="c p" style="left:973px;top:719px;width:47px;height:15px;line-height:14px"><a>COMFORT</a></div>
<div class="c p" style="left:1024px;top:719px;width:47px;height:15px;line-height:14px"><a>COMFORT</a></div>
<div class="c p" style="left:1072px;top:719px;width:47px;height:15px;line-height:14px"><a>COMFORT</a></div>
<div class="c e" style="left:1119px;top:719px;width:47px;height:15px;line-height:14px"><a>ECO</a></div>
<div class="c n" style="left:1167px;top:719px;width:47px;height:15px;line-height:14px"><a>No freeze</a></div>
<div class="c p" style="left:1218px;top:719px;width:47px;height:15px;line-height:14px"><a>COMFORT</a></div>
<div class="c e" style="left:1266px;top:719px;width:47px;height:15px;line-height:14px"><a>ECO</a></div>
<div class="c e" style="left:1314px;top:719px;width:46px;height:15px;line-height:14px"><a>ECO</a></div>
<div class="c n" style="left:1361px;top:719px;width:47px;height:15px;line-height:14px"><a>No freeze</a></div>
<div class="tl" style="left:12.5px;top:735px">07h00</div>
<div class="c e" style="left:54px;top:735px;width:46px;height:16px;line-height:15px"><a>ECO</a></div>
<div class="c p" style="left:101px;top:735px;width:47px;height:16px;line-height:15px"><a>COMFORT</a></div>
<div class="c p" style="left:149px;top:735px;width:47px;height:16px;line-height:15px"><a>COMFORT</a></div>
<div class="c n" style="left:196px;top:735px;width:47px;height:16px;line-height:15px"><a>No freeze</a></div>
<div class="c e" style="left:248px;top:735px;width:47px;height:16px;line-height:15px"><a>ECO</a></div>
<div class="c p" style="left:295px;top:735px;width:47px;height:16px;line-height:15px"><a>COMFORT</a></div>
<div class="c p" style="left:343px;top:735px;width:47px;height:16px;line-height:15px"><a>COMFORT</a></div>
<div class="c n" style="left:390px;top:735px;width:47px;height:16px;line-height:15px"><a>No freeze</a></div>
<div class="c e" style="left:442px;top:735px;width:47px;height:16px;line-height:15px"><a>ECO</a></div>
<div class="c p" style="left:490px;top:735px;width:46px;height:16px;line-height:15px"><a>COMFORT</a></div>
<div class="c p" style="left:537px;top:735px;width:47px;height:16px;line-height:15px"><a>COMFORT</a></div>
<div class="c n" style="left:585px;top:735px;width:46px;height:16px;line-height:15px"><a>No freeze</a></div>
<div class="c e" style="left:636px;top:735px;width:47px;height:16px;line-height:15px"><a>ECO</a></div>
<div class="c p" style="left:684px;top:735px;width:46px;height:16px;line-height:15px"><a>COMFORT</a></div>
<div class="c p" style="left:731px;top:735px;width:47px;height:16px;line-height:15px"><a>COMFORT</a></div>
<div class="c n" style="left:779px;top:735px;width:46px;height:16px;line-height:15px"><a>No freeze</a></div>
<div class="c p" style="left:830px;top:735px;width:47px;height:16px;line-height:15px"><a>COMFORT</a></div>
<div class="c p" style="left:878px;top:735px;width:47px;height:16px;line-height:15px"><a>COMFORT</a></div>
<div class="c p" style="left:925px;top:735px;width:47px;height:16px;line-height:15px"><a>COMFORT</a></div>
<div class="c p" style="left:973px;top:735px;width:47px;height:16px;line-height:15px"><a>COMFORT</a></div>
<div class="c p" style="left:1024px;top:735px;width:47px;height:16px;line-height:15px"><a>COMFORT</a></div>
<div class="c p" style="left:1072px;top:735px;width:47px;height:16px;line-height:15px"><a>COMFORT</a></div>
<div class="c e" style="left:1119px;top:735px;width:47px;height:16px;line-height:15px"><a>ECO</a></div>
<div class="c n" style="left:1167px;top:735px;width:47px;height:16px;line-height:15px"><a>No freeze</a></div>
<div class="c p" style="left:1218px;top:735px;width:47px;height:16px;line-height:15px"><a>COMFORT</a></div>
<div class="c p" style="left:1266px;top:735px;width:47px;height:16px;line-height:15px"><a>COMFORT</a></div>
<div class="c p" style="left:1314px;top:735px;width:46px;height:16px;line-height:15px"><a>COMFORT</a></div>
<div class="c n" style="left:1361px;top:735px;width:47px;height:16px;line-height:15px"><a>No freeze</a></div>
<div class="tl" style="left:12.5px;top:752px">07h15</div>
<div class="c e" style="left:54px;top:752px;width:46px;height:16px;line-height:15px"><a>ECO</a></div>
<div class="c p" style="left:101px;top:752px;width:47px;height:16px;line-height:15px"><a>COMFORT</a></div>
<div class="c p" style="left:149px;top:752px;width:47px;height:16px;line-height:15px"><a>COMFORT</a></div>
<div class="c n" style="left:196px;top:752px;width:47px;height:16px;line-height:15px"><a>No freeze</a></div>
<div class="c e" style="left:248px;top:752px;width:47px;height:16px;line-height:15px"><a>ECO</a></div>
<div class="c p" style="left:295px;top:752px;width:47px;height:16px;line-height:15px"><a>COMFORT</a></div>
<div class="c p" style="left:343px;top:752px;width:47px;height:16px;line-height:15px"><a>COMFORT</a></div>
<div class="c n" style="left:390px;top:752px;width:47px;height:16px;line-height:15px"><a>No freeze</a></div>
<div class="c e" style="left:442px;top:752px;width:47px;height:16px;line-height:15px"><a>ECO</a></div>
<div class="c p" style="left:490px;top:752px;width:46px;height:16px;line-height:15px"><a>COMFORT</a></div>
<div class="c p" style="left:537px;top:752px;width:47px;height:16px;line-height:15px"><a>COMFORT</a></div>
<div class="c n" style="left:585px;top:752px;width:46px;height:16px;line-height:15px"><a>No freeze</a></div>
<div class="c e" style="left:636px;top:752px;width:47px;height:16px;line-height:15px"><a>ECO</a></div>
<div class="c p" style="left:684px;top:752px;width:46px;height:16px;line-height:15px"><a>COMFORT</a></div>
<div class="c p" style="left:731px;top:752px;width:47px;height:16px;line-height:15px"><a>COMFORT</a></div>
<div class="c n" style="left:779px;top:752px;width:46px;height:16px;line-height:15px"><a>No freeze</a></div>
<div class="c p" style="left:830px;top:752px;width:47px;height:16px;line-height:15px"><a>COMFORT</a></div>
<div class="c p" style="left:878px;top:752px;width:47px;height:16px;line-height:15px"><a>COMFORT</a></div>
<div class="c p" style="left:925px;top:752px;width:47px;height:16px;line-height:15px"><a>COMFORT</a></div>
<div class="c e" style="left:973px;top:752px;width:47px;height:16px;line-height:15px"><a>ECO</a></div>
<div class="c p" style="left:1024px;top:752px;width:47px;height:16px;line-height:15px"><a>COMFORT</a></div>
<div class="c p" style="left:1072px;top:752px;width:47px;height:16px;line-height:15px"><a>COMFORT</a></div>
<div class="c p" style="left:1119px;top:752px;width:47px;height:16px;line-height:15px"><a>COMFORT</a></div>
<div class="c n" style="left:1167px;top:752px;width:47px;height:16px;line-height:15px"><a>No freeze</a></div>
<div class="c p" style="left:1218px;top:752px;width:47px;height:16px;line-height:15px"><a>COMFORT</a></div>
<div class="c p" style="left:1266px;top:752px;width:47px;height:16px;line-height:15px"><a>COMFORT</a></div>
<div class="c p" style="left:1314px;top:752px;width:46px;height:16px;line-height:15px"><a>COMFORT</a></div>
<div class="c n" style="left:1361px;top:752px;width:47px;height:16px;line-height:15px"><a>No freeze</a></div>
<div class="tl" style="left:12.5px;top:768px">07h30</div>
<div class="c e" style="left:54px;top:768px;width:46px;height:16px;line-height:15px"><a>ECO</a></div>
<div class="c p" style="left:101px;top:768px;width:47px;height:16px;line-height:15px"><a>COMFORT</a></div>
<div class="c p" style="left:149px;top:768px;width:47px;height:16px;line-height:15px"><a>COMFORT</a></div>
<div class="c n" style="left:196px;top:768px;width:47px;height:16px;line-height:15px"><a>No freeze</a></div>
<div class="c e" style="left:248px;top:768px;width:47px;height:16px;line-height:15px"><a>ECO</a></div>
<div class="c p" style="left:295px;top:768px;width:47px;height:16px;line-height:15px"><a>COMFORT</a></div>
<div class="c p" style="left:343px;top:768px;width:47px;height:16px;line-height:15px"><a>COMFORT</a></div>
<div class="c n" style="left:390px;top:768px;width:47px;height:16px;line-height:15px"><a>No freeze</a></div>
<div class="c e" style="left:442px;top:768px;width:47px;height:16px;line-height:15px"><a>ECO</a></div>
<div class="c p" style="left:490px;top:768px;width:46px;height:16px;line-height:15px"><a>COMFORT</a></div>
<div class="c p" style="left:537px;top:768px;width:47px;height:16px;line-height:15px"><a>COMFORT</a></div>
<div class="c n" style="left:585px;top:768px;width:46px;height:16px;line-height:15px"><a>No freeze</a></div>
<div class="c e" style="left:636px;top:768px;width:47px;height:16px;line-height:15px"><a>ECO</a></div>
<div class="c p" style="left:684px;top:768px;width:46px;height:16px;line-height:15px"><a>COMFORT</a></div>
<div class="c p" style="left:731px;top:768px;width:47px;height:16px;line-height:15px"><a>COMFORT</a></div>
<div class="c n" style="left:779px;top:768px;width:46px;height:16px;line-height:15px"><a>No freeze</a></div>
<div class="c p" style="left:830px;top:768px;width:47px;height:16px;line-height:15px"><a>COMFORT</a></div>
<div class="c p" style="left:878px;top:768px;width:47px;height:16px;line-height:15px"><a>COMFORT</a></div>
<div class="c p" style="left:925px;top:768px;width:47px;height:16px;line-height:15px"><a>COMFORT</a></div>
<div class="c n" style="left:973px;top:768px;width:47px;height:16px;line-height:15px"><a>No freeze</a></div>
<div class="c p" style="left:1024px;top:768px;width:47px;height:16px;line-height:15px"><a>COMFORT</a></div>
<div class="c p" style="left:1072px;top:768px;width:47px;height:16px;line-height:15px"><a>COMFORT</a></div>
<div class="c p" style="left:1119px;top:768px;width:47px;height:16px;line-height:15px"><a>COMFORT</a></div>
<div class="c n" style="left:1167px;top:768px;width:47px;height:16px;line-height:15px"><a>No freeze</a></div>
<div class="c p" style="left:1218px;top:768px;width:47px;height:16px;line-height:15px"><a>COMFORT</a></div>
<div class="c p" style="left:1266px;top:768px;width:47px;height:16px;line-height:15px"><a>COMFORT</a></div>
<div class="c p" style="left:1314px;top:768px;width:46px;height:16px;line-height:15px"><a>COMFORT</a></div>
<div class="c n" style="left:1361px;top:768px;width:47px;height:16px;line-height:15px"><a>No freeze</a></div>
<div class="tl" style="left:12.5px;top:785px">07h45</div>
<div class="c e" style="left:54px;top:785px;width:46px;height:15px;line-height:14px"><a>ECO</a></div>
<div class="c p" style="left:101px;top:785px;width:47px;height:15px;line-height:14px"><a>COMFORT</a></div>
<div class="c p" style="left:149px;top:785px;width:47px;height:15px;line-height:14px"><a>COMFORT</a></div>
<div class="c n" style="left:196px;top:785px;width:47px;height:15px;line-height:14px"><a>No freeze</a></div>
<div class="c e" style="left:248px;top:785px;width:47px;height:15px;line-height:14px"><a>ECO</a></div>
<div class="c p" style="left:295px;top:785px;width:47px;height:15px;line-height:14px"><a>COMFORT</a></div>
<div class="c p" style="left:343px;top:785px;width:47px;height:15px;line-height:14px"><a>COMFORT</a></div>
<div class="c n" style="left:390px;top:785px;width:47px;height:15px;line-height:14px"><a>No freeze</a></div>
<div class="c e" style="left:442px;top:785px;width:47px;height:15px;line-height:14px"><a>ECO</a></div>
<div class="c p" style="left:490px;top:785px;width:46px;height:15px;line-height:14px"><a>COMFORT</a></div>
<div class="c p" style="left:537px;top:785px;width:47px;height:15px;line-height:14px"><a>COMFORT</a></div>
<div class="c n" style="left:585px;top:785px;width:46px;height:15px;line-height:14px"><a>No freeze</a></div>
<div class="c e" style="left:636px;top:785px;width:47px;height:15px;line-height:14px"><a>ECO</a></div>
<div class="c p" style="left:684px;top:785px;width:46px;height:15px;line-height:14px"><a>COMFORT</a></div>
<div class="c p" style="left:731px;top:785px;width:47px;height:15px;line-height:14px"><a>COMFORT</a></div>
<div class="c n" style="left:779px;top:785px;width:46px;height:15px;line-height:14px"><a>No freeze</a></div>
<div class="c p" style="left:830px;top:785px;width:47px;height:15px;line-height:14px"><a>COMFORT</a></div>
<div class="c p" style="left:878px;top:785px;width:47px;height:15px;line-height:14px"><a>COMFORT</a></div>
<div class="c p" style="left:925px;top:785px;width:47px;height:15px;line-height:14px"><a>COMFORT</a></div>
<div class="c n" style="left:973px;top:785px;width:47px;height:15px;line-height:14px"><a>No freeze</a></div>
<div class="c p" style="left:1024px;top:785px;width:47px;height:15px;line-height:14px"><a>COMFORT</a></div>
<div class="c p" style="left:1072px;top:785px;width:47px;height:15px;line-height:14px"><a>COMFORT</a></div>
<div class="c p" style="left:1119px;top:785px;width:47px;height:15px;line-height:14px"><a>COMFORT</a></div>
<div class="c n" style="left:1167px;top:785px;width:47px;height:15px;line-height:14px"><a>No freeze</a></div>
<div class="c p" style="left:1218px;top:785px;width:47px;height:15px;line-height:14px"><a>COMFORT</a></div>
<div class="c p" style="left:1266px;top:785px;width:47px;height:15px;line-height:14px"><a>COMFORT</a></div>
<div class="c p" style="left:1314px;top:785px;width:46px;height:15px;line-height:14px"><a>COMFORT</a></div>
<div class="c n" style="left:1361px;top:785px;width:47px;height:15px;line-height:14px"><a>No freeze</a></div>
<div class="tl" style="left:12.5px;top:801px">08h00</div>
<div class="c e" style="left:54px;top:801px;width:46px;height:15px;line-height:14px"><a>ECO</a></div>
<div class="c p" style="left:101px;top:801px;width:47px;height:15px;line-height:14px"><a>COMFORT</a></div>
<div class="c p" style="left:149px;top:801px;width:47px;height:15px;line-height:14px"><a>COMFORT</a></div>
<div class="c n" style="left:196px;top:801px;width:47px;height:15px;line-height:14px"><a>No freeze</a></div>
<div class="c e" style="left:248px;top:801px;width:47px;height:15px;line-height:14px"><a>ECO</a></div>
<div class="c p" style="left:295px;top:801px;width:47px;height:15px;line-height:14px"><a>COMFORT</a></div>
<div class="c p" style="left:343px;top:801px;width:47px;height:15px;line-height:14px"><a>COMFORT</a></div>
<div class="c n" style="left:390px;top:801px;width:47px;height:15px;line-height:14px"><a>No freeze</a></div>
<div class="c e" style="left:442px;top:801px;width:47px;height:15px;line-height:14px"><a>ECO</a></div>
<div class="c p" style="left:490px;top:801px;width:46px;height:15px;line-height:14px"><a>COMFORT</a></div>
<div class="c p" style="left:537px;top:801px;width:47px;height:15px;line-height:14px"><a>COMFORT</a></div>
<div class="c n" style="left:585px;top:801px;width:46px;height:15px;line-height:14px"><a>No freeze</a></div>
<div class="c e" style="left:636px;top:801px;width:47px;height:15px;line-height:14px"><a>ECO</a></div>
<div class="c p" style="left:684px;top:801px;width:46px;height:15px;line-height:14px"><a>COMFORT</a></div>
<div class="c p" style="left:731px;top:801px;width:47px;height:15px;line-height:14px"><a>COMFORT</a></div>
<div class="c n" style="left:779px;top:801px;width:46px;height:15px;line-height:14px"><a>No freeze</a></div>
<div class="c p" style="left:830px;top:801px;width:47px;height:15px;line-height:14px"><a>COMFORT</a></div>
<div class="c p" style="left:878px;top:801px;width:47px;height:15px;line-height:14px"><a>COMFORT</a></div>
<div class="c p" style="left:925px;top:801px;width:47px;height:15px;line-height:14px"><a>COMFORT</a></div>
<div class="c n" style="left:973px;top:801px;width:47px;height:15px;line-height:14px"><a>No freeze</a></div>
<div class="c p" style="left:1024px;top:801px;width:47px;height:15px;line-height:14px"><a>COMFORT</a></div>
<div class="c p" style="left:1072px;top:801px;width:47px;height:15px;line-height:14px"><a>COMFORT</a></div>
<div class="c p" style="left:1119px;top:801px;width:47px;height:15px;line-height:14px"><a>COMFORT</a></div>
<div class="c n" style="left:1167px;top:801px;width:47px;height:15px;line-height:14px"><a>No freeze</a></div>
<div class="c p" style="left:1218px;top:801px;width:47px;height:15px;line-height:14px"><a>COMFORT</a></div>
<div class="c p" style="left:1266px;top:801px;width:47px;height:15px;line-height:14px"><a>COMFORT</a></div>
<div class="c p" style="left:1314px;top:801px;width:46px;height:15px;line-height:14px"><a>COMFORT</a></div>
<div class="c n" style="left:1361px;top:801px;width:47px;height:15px;line-height:14px"><a>No freeze</a></div>
<div class="tl" style="left:12.5px;top:817px">08h15</div>
<div class="c e" style="left:54px;top:817px;width:46px;height:16px;line-height:15px"><a>ECO</a></div>
<div class="c p" style="left:101px;top:817px;width:47px;height:16px;line-height:15px"><a>COMFORT</a></div>
<div class="c p" style="left:149px;top:817px;width:47px;height:16px;line-height:15px"><a>COMFORT</a></div>
<div class="c n" style="left:196px;top:817px;width:47px;height:16px;line-height:15px"><a>No freeze</a></div>
<div class="c e" style="left:248px;top:817px;width:47px;height:16px;line-height:15px"><a>ECO</a></div>
<div class="c p" style="left:295px;top:817px;width:47px;height:16px;line-height:15px"><a>COMFORT</a></div>
<div class="c p" style="left:343px;top:817px;width:47px;height:16px;line-height:15px"><a>COMFORT</a></div>
<div class="c n" style="left:390px;top:817px;width:47px;height:16px;line-height:15px"><a>No freeze</a></div>
<div class="c e" style="left:442px;top:817px;width:47px;height:16px;line-height:15px"><a>ECO</a></div>
<div class="c p" style="left:490px;top:817px;width:46px;height:16px;line-height:15px"><a>COMFORT</a></div>
<div class="c p" style="left:537px;top:817px;width:47px;height:16px;line-height:15px"><a>COMFORT</a></div>
<div class="c n" style="left:585px;top:817px;width:46px;height:16px;line-height:15px"><a>No freeze</a></div>
<div class="c e" style="left:636px;top:817px;width:47px;height:16px;line-height:15px"><a>ECO</a></div>
<div class="c p" style="left:684px;top:817px;width:46px;height:16px;line-height:15px"><a>COMFORT</a></div>
<div class="c p" style="left:731px;top:817px;width:47px;height:16px;line-height:15px"><a>COMFORT</a></div>
<div class="c n" style="left:779px;top:817px;width:46px;height:16px;line-height:15px"><a>No freeze</a></div>
<div class="c p" style="left:830px;top:817px;width:47px;height:16px;line-height:15px"><a>COMFORT</a></div>
<div class="c p" style="left:878px;top:817px;width:47px;height:16px;line-height:15px"><a>COMFORT</a></div>
<div class="c p" style="left:925px;top:817px;width:47px;height:16px;line-height:15px"><a>COMFORT</a></div>
<div class="c n" style="left:973px;top:817px;width:47px;height:16px;line-height:15px"><a>No freeze</a></div>
<div class="c p" style="left:1024px;top:817px;width:47px;height:16px;line-height:15px"><a>COMFORT</a></div>
<div class="c p" style="left:1072px;top:817px;width:47px;height:16px;line-height:15px"><a>COMFORT</a></div>
<div class="c p" style="left:1119px;top:817px;width:47px;height:16px;line-height:15px"><a>COMFORT</a></div>
<div class="c n" style="left:1167px;top:817px;width:47px;height:16px;line-height:15px"><a>No freeze</a></div>
<div class="c p" style="left:1218px;top:817px;width:47px;height:16px;line-height:15px"><a>COMFORT</a></div>
<div class="c p" style="left:1266px;top:817px;width:47px;height:16px;line-height:15px"><a>COMFORT</a></div>
<div class="c p" style="left:1314px;top:817px;width:46px;height:16px;line-height:15px"><a>COMFORT</a></div>
<div class="c n" style="left:1361px;top:817px;width:47px;height:16px;line-height:15px"><a>No freeze</a></div>
<div class="tl" style="left:12.5px;top:834px">08h30</div>
<div class="c e" style="left:54px;top:834px;width:46px;height:16px;line-height:15px"><a>ECO</a></div>
<div class="c p" style="left:101px;top:834px;width:47px;height:16px;line-height:15px"><a>COMFORT</a></div>
<div class="c p" style="left:149px;top:834px;width:47px;height:16px;line-height:15px"><a>COMFORT</a></div>
<div class="c n" style="left:196px;top:834px;width:47px;height:16px;line-height:15px"><a>No freeze</a></div>
<div class="c e" style="left:248px;top:834px;width:47px;height:16px;line-height:15px"><a>ECO</a></div>
<div class="c p" style="left:295px;top:834px;width:47px;height:16px;line-height:15px"><a>COMFORT</a></div>
<div class="c p" style="left:343px;top:834px;width:47px;height:16px;line-height:15px"><a>COMFORT</a></div>
<div class="c n" style="left:390px;top:834px;width:47px;height:16px;line-height:15px"><a>No freeze</a></div>
<div class="c e" style="left:442px;top:834px;width:47px;height:16px;line-height:15px"><a>ECO</a></div>
<div class="c p" style="left:490px;top:834px;width:46px;height:16px;line-height:15px"><a>COMFORT</a></div>
<div class="c p" style="left:537px;top:834px;width:47px;height:16px;line-height:15px"><a>COMFORT</a></div>
<div class="c n" style="left:585px;top:834px;width:46px;height:16px;line-height:15px"><a>No freeze</a></div>
<div class="c e" style="left:636px;top:834px;width:47px;height:16px;line-height:15px"><a>ECO</a></div>
<div class="c p" style="left:684px;top:834px;width:46px;height:16px;line-height:15px"><a>COMFORT</a></div>
<div class="c p" style="left:731px;top:834px;width:47px;height:16px;line-height:15px"><a>COMFORT</a></div>
<div class="c n" style="left:779px;top:834px;width:46px;height:16px;line-height:15px"><a>No freeze</a></div>
<div class="c p" style="left:830px;top:834px;width:47px;height:16px;line-height:15px"><a>COMFORT</a></div>
<div class="c p" style="left:878px;top:834px;width:47px;height:16px;line-height:15px"><a>COMFORT</a></div>
<div class="c p" style="left:925px;top:834px;width:47px;height:16px;line-height:15px"><a>COMFORT</a></div>
<div class="c n" style="left:973px;top:834px;width:47px;height:16px;line-height:15px"><a>No freeze</a></div>
<div class="c p" style="left:1024px;top:834px;width:47px;height:16px;line-height:15px"><a>COMFORT</a></div>
<div class="c e" style="left:1072px;top:834px;width:47px;height:16px;line-height:15px"><a>ECO</a></div>
<div class="c p" style="left:1119px;top:834px;width:47px;height:16px;line-height:15px"><a>COMFORT</a></div>
<div class="c n" style="left:1167px;top:834px;width:47px;height:16px;line-height:15px"><a>No freeze</a></div>
<div class="c p" style="left:1218px;top:834px;width:47px;height:16px;line-height:15px"><a>COMFORT</a></div>
<div class="c p" style="left:1266px;top:834px;width:47px;height:16px;line-height:15px"><a>COMFORT</a></div>
<div class="c p" style="left:1314px;top:834px;width:46px;height:16px;line-height:15px"><a>COMFORT</a></div>
<div class="c n" style="left:1361px;top:834px;width:47px;height:16px;line-height:15px"><a>No freeze</a></div>
<div class="tl" style="left:12.5px;top:850px">08h45</div>
<div class="c e" style="left:54px;top:850px;width:46px;height:16px;line-height:15px"><a>ECO</a></div>
<div class="c p" style="left:101px;top:850px;width:47px;height:16px;line-height:15px"><a>COMFORT</a></div>
<div class="c p" style="left:149px;top:850px;width:47px;height:16px;line-height:15px"><a>COMFORT</a></div>
<div class="c n" style="left:196px;top:850px;width:47px;height:16px;line-height:15px"><a>No freeze</a></div>
<div class="c e" style="left:248px;top:850px;width:47px;height:16px;line-height:15px"><a>ECO</a></div>
<div class="c p" style="left:295px;top:850px;width:47px;height:16px;line-height:15px"><a>COMFORT</a></div>
<div class="c p" style="left:343px;top:850px;width:47px;height:16px;line-height:15px"><a>COMFORT</a></div>
<div class="c n" style="left:390px;top:850px;width:47px;height:16px;line-height:15px"><a>No freeze</a></div>
<div class="c e" style="left:442px;top:850px;width:47px;height:16px;line-height:15px"><a>ECO</a></div>
<div class="c p" style="left:490px;top:850px;width:46px;height:16px;line-height:15px"><a>COMFORT</a></div>
<div class="c p" style="left:537px;top:850px;width:47px;height:16px;line-height:15px"><a>COMFORT</a></div>
<div class="c n" style="left:585px;top:850px;width:46px;height:16px;line-height:15px"><a>No freeze</a></div>
<div class="c e" style="left:636px;top:850px;width:47px;height:16px;line-height:15px"><a>ECO</a></div>
<div class="c p" style="left:684px;top:850px;width:46px;height:16px;line-height:15px"><a>COMFORT</a></div>
<div class="c p" style="left:731px;top:850px;width:47px;height:16px;line-height:15px"><a>COMFORT</a></div>
<div class="c n" style="left:779px;top:850px;width:46px;height:16px;line-height:15px"><a>No freeze</a></div>
<div class="c p" style="left:830px;top:850px;width:47px;height:16px;line-height:15px"><a>COMFORT</a></div>
<div class="c p" style="left:878px;top:850px;width:47px;height:16px;line-height:15px"><a>COMFORT</a></div>
<div class="c p" style="left:925px;top:850px;width:47px;height:16px;line-height:15px"><a>COMFORT</a></div>
<div class="c n" style="left:973px;top:850px;width:47px;height:16px;line-height:15px"><a>No freeze</a></div>
<div class="c p" style="left:1024px;top:850px;width:47px;height:16px;line-height:15px"><a>COMFORT</a></div>
<div class="c e" style="left:1072px;top:850px;width:47px;height:16px;line-height:15px"><a>ECO</a></div>
<div class="c p" style="left:1119px;top:850px;width:47px;height:16px;line-height:15px"><a>COMFORT</a></div>
<div class="c n" style="left:1167px;top:850px;width:47px;height:16px;line-height:15px"><a>No freeze</a></div>
<div class="c p" style="left:1218px;top:850px;width:47px;height:16px;line-height:15px"><a>COMFORT</a></div>
<div class="c p" style="left:1266px;top:850px;width:47px;height:16px;line-height:15px"><a>COMFORT</a></div>
<div class="c p" style="left:1314px;top:850px;width:46px;height:16px;line-height:15px"><a>COMFORT</a></div>
<div class="c n" style="left:1361px;top:850px;width:47px;height:16px;line-height:15px"><a>No freeze</a></div>
<svg class="a" style="left:436px;top:150px" width="24" height="28" viewBox="0 0 24 28">
<path d="M6.6 5.8 L6.6 22.6 L10.4 18.9 L13.1 24.3 L15.3 23.3 L12.8 17.9 L17.6 17.6 Z" fill="#fff" stroke="#000" stroke-width="1.3" stroke-linejoin="round"/></svg>
</div>
<div class="a" style="left:1px;top:861px;width:1433px;height:3px;background:#d6d2d0;"></div>
<div class="a" style="left:1416px;top:110px;width:18px;height:751px;background:#d6d2d0;"></div>
<svg class="a" style="left:1418px;top:112px" width="12" height="8" viewBox="0 0 12 8">
<path d="M1.5 6.5 L6 2 L10.5 6.5" fill="none" stroke="#8f8b88" stroke-width="1.5"/></svg>
<div class="a" style="left:1417px;top:123px;width:13px;height:713px;border-radius:6px;background:#b5aeab;box-shadow:inset 1px 0 0 #a29c99,inset -1px 0 0 #a29c99"></div>
<div class="a" style="left:1417px;top:123px;width:13px;height:290px;border-radius:6px 6px 5px 5px;background:#8f8a87"></div>
<div class="a" style="left:1419px;top:125px;width:7px;height:284px;border:1px solid #e0dcda;border-radius:4px 4px 3px 3px;background:#c6c2c0"></div>
<svg class="a" style="left:1418px;top:839px" width="12" height="8" viewBox="0 0 12 8">
<path d="M1.5 6.5 L6 2 L10.5 6.5" fill="none" stroke="#8f8b88" stroke-width="1.5"/></svg>
<svg class="a" style="left:1418px;top:851px" width="12" height="8" viewBox="0 0 12 8">
<path d="M1.5 1.5 L6 6 L10.5 1.5" fill="none" stroke="#333" stroke-width="1.6"/></svg>
</div></body></html>
